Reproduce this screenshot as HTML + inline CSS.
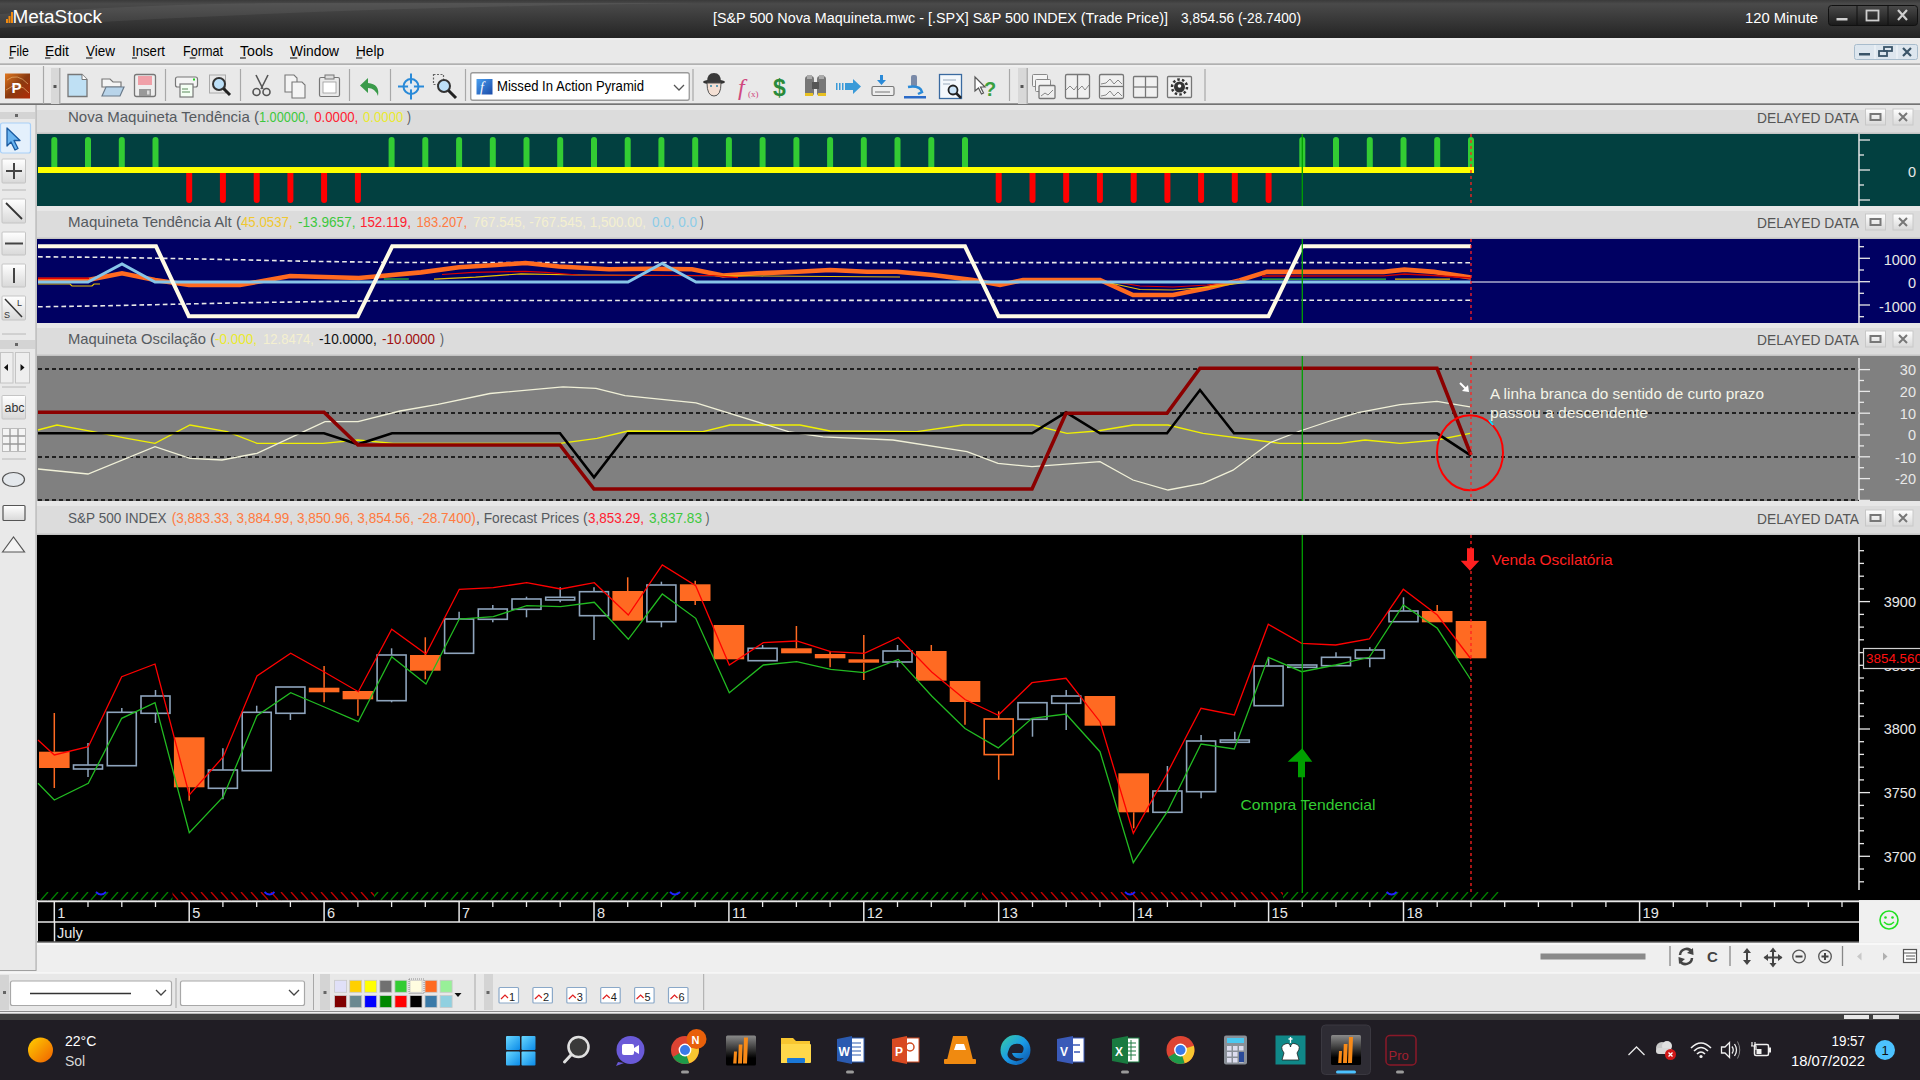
<!DOCTYPE html>
<html><head><meta charset="utf-8"><style>
html,body{margin:0;padding:0;width:1920px;height:1080px;overflow:hidden;background:#f0f0f0;font-family:"Liberation Sans", sans-serif;}
svg{display:block;}
</style></head><body>
<svg width="1920" height="1080" viewBox="0 0 1920 1080">
<defs>
<linearGradient id="tb" x1="0" y1="0" x2="0" y2="1">
<stop offset="0" stop-color="#3a3a3a"/><stop offset="0.1" stop-color="#4a4a4a"/><stop offset="0.5" stop-color="#393939"/><stop offset="1" stop-color="#242424"/></linearGradient>
<linearGradient id="hdr" x1="0" y1="0" x2="0" y2="1">
<stop offset="0" stop-color="#e6e6e6"/><stop offset="1" stop-color="#d8d8d8"/></linearGradient>
<linearGradient id="sun" x1="0" y1="0" x2="1" y2="1">
<stop offset="0" stop-color="#ffd000"/><stop offset="1" stop-color="#f06000"/></linearGradient>
<linearGradient id="btn" x1="0" y1="0" x2="0" y2="1">
<stop offset="0" stop-color="#ffffff"/><stop offset="1" stop-color="#d8d8d8"/></linearGradient>
<linearGradient id="wbtn" x1="0" y1="0" x2="0" y2="1">
<stop offset="0" stop-color="#4a4a4a"/><stop offset="1" stop-color="#1a1a1a"/></linearGradient>
<pattern id="hatchG" width="10" height="9" patternUnits="userSpaceOnUse"><path d="M1 9 L8 1" stroke="#008000" stroke-width="1.3"/></pattern>
<pattern id="hatchR" width="10" height="9" patternUnits="userSpaceOnUse"><path d="M1 1 L8 9" stroke="#c00000" stroke-width="1.3"/></pattern>
</defs><rect x="0" y="0" width="1920" height="1080" fill="#f0f0f0"/><rect x="0" y="0" width="1920" height="38" fill="url(#tb)"/><path d="M0 14 Q150 4 280 3 L700 3 Q300 8 0 28 Z" fill="#ffffff" opacity="0.06"/><rect x="6" y="19" width="2" height="4" fill="#f08a10"/><rect x="8.5" y="16" width="2" height="7" fill="#f08a10"/><rect x="11" y="12" width="2" height="11" fill="#f08a10"/><text x="12.5" y="23.2" font-family='"Liberation Sans", sans-serif' font-size="18" fill="#ffffff" textLength="89.5" lengthAdjust="spacingAndGlyphs">MetaStock</text><text x="713" y="23.2" font-family='"Liberation Sans", sans-serif' font-size="15.5" fill="#ffffff" textLength="455" lengthAdjust="spacingAndGlyphs">[S&amp;P 500 Nova Maquineta.mwc - [.SPX] S&amp;P 500 INDEX (Trade Price)]</text><text x="1181" y="23.2" font-family='"Liberation Sans", sans-serif' font-size="15.5" fill="#ffffff" textLength="120" lengthAdjust="spacingAndGlyphs">3,854.56 (-28.7400)</text><text x="1745" y="22.5" font-family='"Liberation Sans", sans-serif' font-size="15" fill="#ffffff" textLength="73" lengthAdjust="spacingAndGlyphs">120 Minute</text><rect x="1828.5" y="5.5" width="89" height="20" rx="3" fill="url(#wbtn)" stroke="#111" stroke-width="1"/><line x1="1857" y1="6" x2="1857" y2="25" stroke="#111"/><line x1="1888" y1="6" x2="1888" y2="25" stroke="#111"/><rect x="1836.5" y="18" width="11" height="2.5" fill="#cfcfcf"/><rect x="1866.5" y="10.5" width="12" height="10" fill="none" stroke="#cfcfcf" stroke-width="1.8"/><path d="M1898 10 L1907 20 M1907 10 L1898 20" stroke="#cfcfcf" stroke-width="2.2"/><rect x="0" y="38" width="1920" height="26" fill="#e9e9e9"/><rect x="0" y="38.5" width="1920" height="1" fill="#f4f4f4"/><rect x="0" y="63.3" width="1920" height="1.7" fill="#b0b0b0"/><text x="9" y="56" font-family='"Liberation Sans", sans-serif' font-size="15" fill="#000" textLength="20" lengthAdjust="spacingAndGlyphs">File</text><text x="45" y="56" font-family='"Liberation Sans", sans-serif' font-size="15" fill="#000" textLength="24" lengthAdjust="spacingAndGlyphs">Edit</text><text x="86" y="56" font-family='"Liberation Sans", sans-serif' font-size="15" fill="#000" textLength="29" lengthAdjust="spacingAndGlyphs">View</text><text x="132" y="56" font-family='"Liberation Sans", sans-serif' font-size="15" fill="#000" textLength="33" lengthAdjust="spacingAndGlyphs">Insert</text><text x="183" y="56" font-family='"Liberation Sans", sans-serif' font-size="15" fill="#000" textLength="40" lengthAdjust="spacingAndGlyphs">Format</text><text x="240" y="56" font-family='"Liberation Sans", sans-serif' font-size="15" fill="#000" textLength="33" lengthAdjust="spacingAndGlyphs">Tools</text><text x="290" y="56" font-family='"Liberation Sans", sans-serif' font-size="15" fill="#000" textLength="49" lengthAdjust="spacingAndGlyphs">Window</text><text x="356" y="56" font-family='"Liberation Sans", sans-serif' font-size="15" fill="#000" textLength="28" lengthAdjust="spacingAndGlyphs">Help</text><rect x="9.0" y="57.5" width="4.5" height="1" fill="#000"/><rect x="45.0" y="57.5" width="5.4" height="1" fill="#000"/><rect x="86.0" y="57.5" width="6.5" height="1" fill="#000"/><rect x="132.0" y="57.5" width="5.0" height="1" fill="#000"/><rect x="189.7" y="57.5" width="6.0" height="1" fill="#000"/><rect x="240.0" y="57.5" width="5.9" height="1" fill="#000"/><rect x="290.0" y="57.5" width="7.3" height="1" fill="#000"/><rect x="356.0" y="57.5" width="6.3" height="1" fill="#000"/><rect x="1854.5" y="44.5" width="63" height="15" rx="2" fill="#dde6ee" stroke="#a8bccc" stroke-width="1"/><line x1="1875" y1="45" x2="1875" y2="59" stroke="#f4f8fb"/><line x1="1897" y1="45" x2="1897" y2="59" stroke="#f4f8fb"/><rect x="1859" y="53" width="11" height="2.5" fill="#3a5468"/><rect x="1879" y="51" width="8" height="5" fill="none" stroke="#3a5468" stroke-width="1.8"/><rect x="1884" y="47" width="8" height="4" fill="none" stroke="#3a5468" stroke-width="1.8"/><path d="M1903 48 L1911 56 M1911 48 L1903 56" stroke="#3a5468" stroke-width="2.2"/><rect x="0" y="65" width="1920" height="39" fill="#e9e9e9"/><rect x="0" y="65.5" width="1920" height="1" fill="#f6f6f6"/><rect x="0" y="103.3" width="1920" height="2.2" fill="#747474"/><rect x="0" y="105" width="36" height="866" fill="#e9e9e9"/><rect x="35.6" y="105" width="2" height="866" fill="#9c9c9c"/><rect x="0" y="970" width="37" height="1.2" fill="#a0a0a0"/><rect x="36.5" y="105" width="1883.5" height="866" fill="#e8e8e8"/><linearGradient id="plogo" x1="0" y1="0" x2="1" y2="1"><stop offset="0" stop-color="#e07820"/><stop offset="0.5" stop-color="#8a3a10"/><stop offset="1" stop-color="#b02a08"/></linearGradient><rect x="5" y="73.5" width="25" height="25" fill="url(#plogo)"/><path d="M7 80 Q17 72 28 84 M6 90 Q18 80 29 93" stroke="#f0c080" stroke-width="1" fill="none" opacity="0.6"/><text x="11.5" y="93" font-family='"Liberation Sans", sans-serif' font-size="15" font-weight="bold" fill="#ffffff">P</text><line x1="43.5" y1="66" x2="43.5" y2="104" stroke="#a8a8a8" stroke-width="1.2"/><rect x="51" y="68" width="9" height="36" fill="#d8d8d8"/><rect x="59" y="68" width="1.5" height="36" fill="#b0b0b0"/><rect x="53.5" y="85" width="3" height="3" fill="#555"/><path d="M68 74.5 L82 74.5 L87 79.5 L87 96.5 L68 96.5 Z" fill="#bfe0f4" stroke="#777" stroke-width="1.3"/><path d="M82 74.5 L82 79.5 L87 79.5" fill="#fff" stroke="#777" stroke-width="1"/><path d="M102 79 L110 79 L113 82 L121 82 L121 87 L102 87 Z" fill="#f4f4f4" stroke="#777" stroke-width="1.2"/><path d="M102 96 L106 87 L124 87 L120 96 Z" fill="#b8d4ea" stroke="#6a7a8a" stroke-width="1.2"/><rect x="134.5" y="74.5" width="21" height="22" rx="2" fill="#eee" stroke="#777" stroke-width="1.3"/><rect x="138" y="76" width="14" height="9" fill="#f0a0a8"/><rect x="139" y="89" width="12" height="7" fill="#999"/><rect x="147" y="90.5" width="2.5" height="4" fill="#ddd"/><line x1="165.5" y1="69" x2="165.5" y2="101" stroke="#a8a8a8" stroke-width="1.2"/><rect x="175.5" y="77" width="22" height="10" rx="2" fill="#f4f4f4" stroke="#777" stroke-width="1.2"/><rect x="180" y="84" width="13" height="13" fill="#f4fff4" stroke="#777" stroke-width="1.2"/><line x1="182" y1="89" x2="188" y2="89" stroke="#5a8a5a"/><line x1="182" y1="92" x2="190" y2="92" stroke="#5a8a5a"/><rect x="193" y="78.5" width="2" height="2" fill="#2c2"/><rect x="209.5" y="75" width="16" height="18" fill="#e8e8e8" stroke="#aaa"/><circle cx="219" cy="84" r="6" fill="#bde0f8" stroke="#333" stroke-width="2"/><line x1="223.5" y1="88.5" x2="230" y2="95" stroke="#222" stroke-width="3"/><line x1="240.5" y1="69" x2="240.5" y2="101" stroke="#a8a8a8" stroke-width="1.2"/><path d="M256 75 L263 89 M268 75 L261 89" stroke="#555" stroke-width="1.6"/><circle cx="256.5" cy="92" r="3.5" fill="none" stroke="#555" stroke-width="1.6"/><circle cx="266.5" cy="92" r="3.5" fill="none" stroke="#555" stroke-width="1.6"/><path d="M285 75 L294 75 L297 78 L297 92 L285 92 Z" fill="#f4f4f4" stroke="#777" stroke-width="1.1"/><path d="M292 82 L302 82 L305 85 L305 98 L292 98 Z" fill="#f4f4f4" stroke="#777" stroke-width="1.1"/><rect x="319.5" y="77.5" width="20" height="19" rx="1.5" fill="#eaeaea" stroke="#777" stroke-width="1.2"/><rect x="325" y="75" width="9" height="4" fill="#ddd" stroke="#777"/><rect x="323" y="82" width="13" height="11" fill="#fff" stroke="#999" stroke-width="0.8"/><line x1="349.5" y1="69" x2="349.5" y2="101" stroke="#a8a8a8" stroke-width="1.2"/><path d="M378 96 Q380 84 368 83 L368 78 L360 85.5 L368 93 L368 88 Q375 88 378 96 Z" fill="#3a9a4a"/><line x1="390.5" y1="69" x2="390.5" y2="101" stroke="#a8a8a8" stroke-width="1.2"/><circle cx="411" cy="86.5" r="7.5" fill="none" stroke="#2a8ad8" stroke-width="2"/><line x1="398" y1="86.5" x2="424" y2="86.5" stroke="#2a8ad8" stroke-width="2"/><line x1="411" y1="73.5" x2="411" y2="99.5" stroke="#2a8ad8" stroke-width="2"/><circle cx="411" cy="86.5" r="3" fill="#e0ecf8"/><rect x="433.5" y="74.5" width="10" height="10" fill="none" stroke="#666" stroke-width="1.2" stroke-dasharray="2,1.5"/><circle cx="444" cy="86" r="6" fill="#bde0f8" stroke="#333" stroke-width="2"/><line x1="448.5" y1="90.5" x2="456" y2="98" stroke="#222" stroke-width="3"/><line x1="465.5" y1="69" x2="465.5" y2="101" stroke="#a8a8a8" stroke-width="1.2"/><rect x="470.75" y="72.75" width="218.5" height="27.5" rx="2" fill="#ffffff" stroke="#9a9a9a" stroke-width="1.3"/><linearGradient id="fblue" x1="0" y1="0" x2="1" y2="1"><stop offset="0" stop-color="#4aa0f0"/><stop offset="1" stop-color="#1a4aa8"/></linearGradient><rect x="476.5" y="79" width="16" height="15.5" fill="url(#fblue)"/><text x="480" y="91.5" font-family="Liberation Serif, serif" font-size="14" font-style="italic" fill="#fff">f</text><text x="497" y="91" font-family='"Liberation Sans", sans-serif' font-size="14.5" fill="#000" textLength="147" lengthAdjust="spacingAndGlyphs">Missed In Action Pyramid</text><path d="M674 85 L679 90 L684 85" fill="none" stroke="#555" stroke-width="1.3"/><line x1="693" y1="69" x2="693" y2="101" stroke="#a8a8a8" stroke-width="1.2"/><ellipse cx="714" cy="82" rx="11" ry="2.5" fill="#333"/><path d="M707 82 Q707 73 714 73 Q721 73 721 82 Z" fill="#3a3a3a"/><path d="M707 83 Q707 96 714 96 Q721 96 721 83 Z" fill="#f4e0d4" stroke="#555" stroke-width="1"/><circle cx="711" cy="86" r="1" fill="#38a"/><circle cx="717" cy="86" r="1" fill="#38a"/><text x="738" y="95" font-family="Liberation Serif, serif" font-size="24" font-style="italic" fill="#d04880">f</text><text x="748" y="97" font-family="Liberation Serif, serif" font-size="9" fill="#d04880">(x)</text><text x="773" y="96" font-family='"Liberation Sans", sans-serif' font-size="23" font-weight="bold" fill="#2a8a3a">$</text><rect x="805" y="76" width="9" height="20" rx="3" fill="#777"/><rect x="817" y="76" width="9" height="20" rx="3" fill="#777"/><rect x="812" y="82" width="7" height="7" fill="#555"/><rect x="805" y="93" width="8" height="3" fill="#e8c020"/><rect x="818" y="93" width="8" height="3" fill="#e8c020"/><rect x="807" y="75" width="5" height="4" fill="#aaa"/><rect x="819" y="75" width="5" height="4" fill="#aaa"/><path d="M836 83 L837.5 83 L837.5 90 L836 90 Z M839 83 L840.5 83 L840.5 90 L839 90 Z M842 83 L843.5 83 L843.5 90 L842 90 Z" fill="#3a9ad8"/><path d="M845 83 L853 83 L853 79 L861 86.5 L853 94 L853 90 L845 90 Z" fill="#3a9ad8"/><rect x="872" y="86.5" width="22" height="9" rx="1.5" fill="#eee" stroke="#777" stroke-width="1.2"/><line x1="875" y1="92" x2="890" y2="92" stroke="#777"/><path d="M880 75 L883 75 L883 80 L886 80 L881.5 85 L877 80 L880 80 Z" fill="#2a8ad8"/><rect x="911" y="75" width="6" height="12" rx="2" fill="#7a8aa8"/><path d="M908 87 Q920 85 922 92 L918 94" fill="none" stroke="#2a8ad8" stroke-width="2.5"/><rect x="904" y="96" width="22" height="2.5" fill="#2a6ac8"/><rect x="939.5" y="74.5" width="22" height="24" fill="#f4f8fc" stroke="#3a6aa0" stroke-width="1.3"/><line x1="943" y1="80" x2="956" y2="80" stroke="#9ab"/><line x1="943" y1="84" x2="950" y2="84" stroke="#9ab"/><circle cx="953" cy="90" r="4.5" fill="#cce4f8" stroke="#222" stroke-width="1.8"/><line x1="956" y1="93" x2="961" y2="98" stroke="#222" stroke-width="2.5"/><path d="M975 77 L975 91 L978.5 88 L981.5 94 L983.5 93 L980.5 87 L985 87 Z" fill="#fff" stroke="#555" stroke-width="1.2"/><text x="984" y="96" font-family='"Liberation Sans", sans-serif' font-size="20" font-weight="bold" fill="#3aa040">?</text><line x1="1009.5" y1="69" x2="1009.5" y2="101" stroke="#a8a8a8" stroke-width="1.2"/><rect x="1018" y="68" width="9" height="36" fill="#d8d8d8"/><rect x="1026.5" y="68" width="1.5" height="36" fill="#b0b0b0"/><rect x="1020.5" y="85" width="3" height="3" fill="#555"/><rect x="1032.5" y="74.5" width="15" height="12" rx="1" fill="#f4f4f4" stroke="#888"/><rect x="1035.5" y="79.5" width="15" height="12" rx="1" fill="#f4f4f4" stroke="#888"/><rect x="1039" y="85.5" width="16" height="13" rx="1" fill="#eee" stroke="#777" stroke-width="1.3"/><path d="M1041 96 L1045 93 L1048 95 L1053 90" fill="none" stroke="#888"/><rect x="1065.5" y="74.5" width="24" height="24" rx="1.5" fill="#f0f0f0" stroke="#777" stroke-width="1.3"/><line x1="1077.5" y1="75" x2="1077.5" y2="98" stroke="#777" stroke-width="1.3"/><path d="M1066 90 L1070 86 L1074 90 L1077 86 M1078 90 L1082 86 L1085 90 L1089 85" fill="none" stroke="#888"/><rect x="1099.5" y="74.5" width="24" height="24" rx="1.5" fill="#f0f0f0" stroke="#777" stroke-width="1.3"/><line x1="1100" y1="86.5" x2="1123" y2="86.5" stroke="#777" stroke-width="1.3"/><path d="M1101 84 L1106 83 L1110 79 L1114 84 L1118 80 L1122 84 M1101 96 L1106 95 L1110 91 L1114 96 L1118 92 L1122 96" fill="none" stroke="#888"/><rect x="1133.5" y="76.5" width="24" height="21" rx="1" fill="#f0f0f0" stroke="#777" stroke-width="1.3"/><line x1="1145.5" y1="77" x2="1145.5" y2="97" stroke="#777" stroke-width="1.3"/><line x1="1134" y1="87" x2="1157" y2="87" stroke="#777" stroke-width="1.3"/><rect x="1167.5" y="76.5" width="24" height="21" rx="1" fill="#f0f0f0" stroke="#777" stroke-width="1.3"/><circle cx="1179.5" cy="87" r="5.5" fill="#333"/><circle cx="1179.5" cy="87" r="7.5" fill="none" stroke="#333" stroke-width="2.5" stroke-dasharray="2.5,2.2"/><circle cx="1179.5" cy="86" r="1.8" fill="#fff"/><line x1="1205" y1="69" x2="1205" y2="101" stroke="#a8a8a8" stroke-width="1.2"/>
<rect x="37" y="105" width="1883" height="29" fill="#dcdcdc"/><rect x="37" y="105" width="1883" height="5" fill="#e7e7e7"/><rect x="37" y="132.5" width="1883" height="1.5" fill="#c4c4c4"/><rect x="37" y="134" width="1883" height="72" fill="#024040"/><text x="1757" y="122.5" font-family='"Liberation Sans", sans-serif' font-size="15" fill="#555555" textLength="102" lengthAdjust="spacingAndGlyphs">DELAYED DATA</text><rect x="1865.5" y="109.0" width="20" height="16" fill="url(#btn)" stroke="#c8c8c8"/><rect x="1870.5" y="114.0" width="10" height="6" fill="none" stroke="#777" stroke-width="2"/><rect x="1893" y="109.0" width="20" height="16" fill="url(#btn)" stroke="#c8c8c8"/><path d="M1899 113.0 L1907 121.0 M1907 113.0 L1899 121.0" stroke="#777" stroke-width="2"/><rect x="37" y="206" width="1883" height="33" fill="#dcdcdc"/><rect x="37" y="206" width="1883" height="5" fill="#e7e7e7"/><rect x="37" y="237.5" width="1883" height="1.5" fill="#c4c4c4"/><rect x="37" y="239" width="1883" height="84" fill="#000062"/><text x="1757" y="227.5" font-family='"Liberation Sans", sans-serif' font-size="15" fill="#555555" textLength="102" lengthAdjust="spacingAndGlyphs">DELAYED DATA</text><rect x="1865.5" y="214.0" width="20" height="16" fill="url(#btn)" stroke="#c8c8c8"/><rect x="1870.5" y="219.0" width="10" height="6" fill="none" stroke="#777" stroke-width="2"/><rect x="1893" y="214.0" width="20" height="16" fill="url(#btn)" stroke="#c8c8c8"/><path d="M1899 218.0 L1907 226.0 M1907 218.0 L1899 226.0" stroke="#777" stroke-width="2"/><rect x="37" y="323" width="1883" height="33" fill="#dcdcdc"/><rect x="37" y="323" width="1883" height="5" fill="#e7e7e7"/><rect x="37" y="354.5" width="1883" height="1.5" fill="#c4c4c4"/><rect x="37" y="356" width="1883" height="145" fill="#808080"/><text x="1757" y="344.5" font-family='"Liberation Sans", sans-serif' font-size="15" fill="#555555" textLength="102" lengthAdjust="spacingAndGlyphs">DELAYED DATA</text><rect x="1865.5" y="331.0" width="20" height="16" fill="url(#btn)" stroke="#c8c8c8"/><rect x="1870.5" y="336.0" width="10" height="6" fill="none" stroke="#777" stroke-width="2"/><rect x="1893" y="331.0" width="20" height="16" fill="url(#btn)" stroke="#c8c8c8"/><path d="M1899 335.0 L1907 343.0 M1907 335.0 L1899 343.0" stroke="#777" stroke-width="2"/><rect x="37" y="501" width="1883" height="34" fill="#dcdcdc"/><rect x="37" y="501" width="1883" height="5" fill="#e7e7e7"/><rect x="37" y="533.5" width="1883" height="1.5" fill="#c4c4c4"/><rect x="37" y="535" width="1883" height="365" fill="#000000"/><text x="1757" y="523.5" font-family='"Liberation Sans", sans-serif' font-size="15" fill="#555555" textLength="102" lengthAdjust="spacingAndGlyphs">DELAYED DATA</text><rect x="1865.5" y="510.0" width="20" height="16" fill="url(#btn)" stroke="#c8c8c8"/><rect x="1870.5" y="515.0" width="10" height="6" fill="none" stroke="#777" stroke-width="2"/><rect x="1893" y="510.0" width="20" height="16" fill="url(#btn)" stroke="#c8c8c8"/><path d="M1899 514.0 L1907 522.0 M1907 514.0 L1899 522.0" stroke="#777" stroke-width="2"/><line x1="54.3" y1="140" x2="54.3" y2="170" stroke="#33cc33" stroke-width="6" stroke-linecap="round"/><line x1="88.0" y1="140" x2="88.0" y2="170" stroke="#33cc33" stroke-width="6" stroke-linecap="round"/><line x1="121.8" y1="140" x2="121.8" y2="170" stroke="#33cc33" stroke-width="6" stroke-linecap="round"/><line x1="155.5" y1="140" x2="155.5" y2="170" stroke="#33cc33" stroke-width="6" stroke-linecap="round"/><line x1="189.2" y1="170" x2="189.2" y2="200" stroke="#ff0000" stroke-width="6" stroke-linecap="round"/><line x1="222.9" y1="170" x2="222.9" y2="200" stroke="#ff0000" stroke-width="6" stroke-linecap="round"/><line x1="256.7" y1="170" x2="256.7" y2="200" stroke="#ff0000" stroke-width="6" stroke-linecap="round"/><line x1="290.4" y1="170" x2="290.4" y2="200" stroke="#ff0000" stroke-width="6" stroke-linecap="round"/><line x1="324.1" y1="170" x2="324.1" y2="200" stroke="#ff0000" stroke-width="6" stroke-linecap="round"/><line x1="357.9" y1="170" x2="357.9" y2="200" stroke="#ff0000" stroke-width="6" stroke-linecap="round"/><line x1="391.6" y1="140" x2="391.6" y2="170" stroke="#33cc33" stroke-width="6" stroke-linecap="round"/><line x1="425.3" y1="140" x2="425.3" y2="170" stroke="#33cc33" stroke-width="6" stroke-linecap="round"/><line x1="459.1" y1="140" x2="459.1" y2="170" stroke="#33cc33" stroke-width="6" stroke-linecap="round"/><line x1="492.8" y1="140" x2="492.8" y2="170" stroke="#33cc33" stroke-width="6" stroke-linecap="round"/><line x1="526.5" y1="140" x2="526.5" y2="170" stroke="#33cc33" stroke-width="6" stroke-linecap="round"/><line x1="560.2" y1="140" x2="560.2" y2="170" stroke="#33cc33" stroke-width="6" stroke-linecap="round"/><line x1="594.0" y1="140" x2="594.0" y2="170" stroke="#33cc33" stroke-width="6" stroke-linecap="round"/><line x1="627.7" y1="140" x2="627.7" y2="170" stroke="#33cc33" stroke-width="6" stroke-linecap="round"/><line x1="661.4" y1="140" x2="661.4" y2="170" stroke="#33cc33" stroke-width="6" stroke-linecap="round"/><line x1="695.2" y1="140" x2="695.2" y2="170" stroke="#33cc33" stroke-width="6" stroke-linecap="round"/><line x1="728.9" y1="140" x2="728.9" y2="170" stroke="#33cc33" stroke-width="6" stroke-linecap="round"/><line x1="762.6" y1="140" x2="762.6" y2="170" stroke="#33cc33" stroke-width="6" stroke-linecap="round"/><line x1="796.4" y1="140" x2="796.4" y2="170" stroke="#33cc33" stroke-width="6" stroke-linecap="round"/><line x1="830.1" y1="140" x2="830.1" y2="170" stroke="#33cc33" stroke-width="6" stroke-linecap="round"/><line x1="863.8" y1="140" x2="863.8" y2="170" stroke="#33cc33" stroke-width="6" stroke-linecap="round"/><line x1="897.5" y1="140" x2="897.5" y2="170" stroke="#33cc33" stroke-width="6" stroke-linecap="round"/><line x1="931.3" y1="140" x2="931.3" y2="170" stroke="#33cc33" stroke-width="6" stroke-linecap="round"/><line x1="965.0" y1="140" x2="965.0" y2="170" stroke="#33cc33" stroke-width="6" stroke-linecap="round"/><line x1="998.7" y1="170" x2="998.7" y2="200" stroke="#ff0000" stroke-width="6" stroke-linecap="round"/><line x1="1032.5" y1="170" x2="1032.5" y2="200" stroke="#ff0000" stroke-width="6" stroke-linecap="round"/><line x1="1066.2" y1="170" x2="1066.2" y2="200" stroke="#ff0000" stroke-width="6" stroke-linecap="round"/><line x1="1099.9" y1="170" x2="1099.9" y2="200" stroke="#ff0000" stroke-width="6" stroke-linecap="round"/><line x1="1133.7" y1="170" x2="1133.7" y2="200" stroke="#ff0000" stroke-width="6" stroke-linecap="round"/><line x1="1167.4" y1="170" x2="1167.4" y2="200" stroke="#ff0000" stroke-width="6" stroke-linecap="round"/><line x1="1201.1" y1="170" x2="1201.1" y2="200" stroke="#ff0000" stroke-width="6" stroke-linecap="round"/><line x1="1234.8" y1="170" x2="1234.8" y2="200" stroke="#ff0000" stroke-width="6" stroke-linecap="round"/><line x1="1268.6" y1="170" x2="1268.6" y2="200" stroke="#ff0000" stroke-width="6" stroke-linecap="round"/><line x1="1302.3" y1="140" x2="1302.3" y2="170" stroke="#33cc33" stroke-width="6" stroke-linecap="round"/><line x1="1336.0" y1="140" x2="1336.0" y2="170" stroke="#33cc33" stroke-width="6" stroke-linecap="round"/><line x1="1369.8" y1="140" x2="1369.8" y2="170" stroke="#33cc33" stroke-width="6" stroke-linecap="round"/><line x1="1403.5" y1="140" x2="1403.5" y2="170" stroke="#33cc33" stroke-width="6" stroke-linecap="round"/><line x1="1437.2" y1="140" x2="1437.2" y2="170" stroke="#33cc33" stroke-width="6" stroke-linecap="round"/><line x1="1471.0" y1="140" x2="1471.0" y2="170" stroke="#33cc33" stroke-width="6" stroke-linecap="round"/><rect x="38" y="167" width="1436" height="6" fill="#ffff00"/><polyline points="38.0,256.8 104.0,257.3 172.0,258.5 240.0,259.8 306.0,261.3 400.0,262.5 1471.0,262.7" fill="none" stroke="#e8e8e8" stroke-width="1.6" stroke-linejoin="miter" stroke-dasharray="4.7,3.1"/><polyline points="38.0,306.8 104.0,305.8 172.0,304.3 240.0,302.8 306.0,301.8 400.0,300.5 1471.0,300.2" fill="none" stroke="#e8e8e8" stroke-width="1.6" stroke-linejoin="miter" stroke-dasharray="4.7,3.1"/><line x1="1471" y1="282" x2="1859" y2="282" stroke="#ffffff" stroke-width="1"/><polyline points="38.0,280.0 88.0,280.0 122.0,273.3 155.0,280.0 189.0,285.0 240.0,285.0 290.0,276.0 324.0,277.0 358.8,278.0 375.5,276.5 421.0,272.4 459.0,267.2 496.0,265.0 525.5,263.0 559.0,266.5 609.0,269.2 650.5,268.8 692.0,269.2 723.0,275.5 757.0,273.3 797.0,271.7 830.0,270.0 867.0,271.7 897.0,271.7 933.0,275.0 973.0,280.0 1000.0,285.0 1023.0,280.0 1100.0,280.0 1133.0,295.0 1173.0,295.0 1207.0,288.3 1239.4,280.4 1266.9,271.9 1292.0,271.9 1383.7,271.9 1404.3,269.6 1434.0,271.9 1471.0,277.4" fill="none" stroke="#ff6a20" stroke-width="4.6" stroke-linejoin="miter" /><polyline points="434.0,279.2 475.5,277.2 521.0,273.8 577.6,275.0 760.0,276.0 900.0,277.0" fill="none" stroke="#e8c000" stroke-width="1.2" stroke-linejoin="miter" /><polyline points="442.0,274.5 473.0,272.4 525.5,271.3 546.0,272.4 577.6,275.0 713.0,275.5 738.0,277.6" fill="none" stroke="#e00000" stroke-width="1.2" stroke-linejoin="miter" /><polyline points="383.8,279.0 408.8,279.0" fill="none" stroke="#30c030" stroke-width="1.2" stroke-linejoin="miter" /><polyline points="1110.0,283.0 1140.0,289.5 1173.0,290.0 1210.0,287.0 1250.0,282.0" fill="none" stroke="#e8c000" stroke-width="1.2" stroke-linejoin="miter" /><polyline points="1110.0,281.0 1140.0,286.0 1173.0,287.0 1207.0,285.0 1240.0,280.0" fill="none" stroke="#e00000" stroke-width="1.2" stroke-linejoin="miter" /><polyline points="38.0,278.3 89.0,278.3" fill="none" stroke="#e00000" stroke-width="1.5" stroke-linejoin="miter" /><polyline points="1262.0,276.0 1383.7,275.8 1404.3,274.0 1434.0,275.5 1471.0,278.0" fill="none" stroke="#d00000" stroke-width="1.3" stroke-linejoin="miter" /><polyline points="1262.0,279.2 1386.0,279.2" fill="none" stroke="#30c030" stroke-width="1.3" stroke-linejoin="miter" /><polyline points="1395.0,279.2 1450.0,279.2" fill="none" stroke="#e8c000" stroke-width="1.3" stroke-linejoin="miter" /><polyline points="38.0,284.0 70.0,284.0 72.0,286.0 92.0,286.0 94.0,284.0 100.0,284.0" fill="none" stroke="#e8c000" stroke-width="1.2" stroke-linejoin="miter" /><polyline points="38.0,282.0 88.0,282.0 122.0,264.0 155.0,282.0 628.0,282.0 662.0,263.5 696.0,282.0 1471.0,282.0" fill="none" stroke="#87c5e8" stroke-width="3" stroke-linejoin="miter" /><polyline points="38.0,246.3 156.0,246.3 188.8,316.2 357.8,316.2 392.2,246.3 965.0,246.3 998.5,316.2 1268.5,316.2 1302.3,246.3 1471.0,246.3" fill="none" stroke="#fffbe6" stroke-width="4" stroke-linejoin="miter" /><line x1="38" y1="369" x2="1859" y2="369" stroke="#000000" stroke-width="1.3" stroke-dasharray="4,3"/><line x1="38" y1="413" x2="1859" y2="413" stroke="#000000" stroke-width="1.3" stroke-dasharray="4,3"/><line x1="38" y1="457" x2="1859" y2="457" stroke="#000000" stroke-width="1.3" stroke-dasharray="4,3"/><line x1="38" y1="500" x2="1859" y2="500" stroke="#000000" stroke-width="1.3" stroke-dasharray="4,3"/><polyline points="38.0,430.0 57.0,425.0 93.0,431.7 127.0,438.3 155.0,443.3 190.0,425.0 227.0,431.7 257.0,443.3 323.0,443.3 358.0,440.0 393.0,443.3 560.0,443.3 597.0,438.3 628.0,431.0 703.0,431.7 730.0,425.0 800.0,425.0 830.0,431.0 917.0,431.7 963.0,425.0 1033.0,425.0 1067.0,433.3 1097.0,431.0 1133.0,425.0 1168.0,425.0 1203.0,433.3 1280.0,443.3 1340.0,443.3 1365.0,440.0 1400.0,443.3 1437.0,440.0 1470.0,433.3" fill="none" stroke="#f0f000" stroke-width="1.3" stroke-linejoin="miter" /><polyline points="38.0,469.0 88.0,474.0 155.0,446.7 190.0,458.3 222.0,460.0 257.0,453.3 325.0,421.7 358.0,421.7 400.0,411.0 438.0,404.3 490.0,393.5 563.0,386.8 596.0,388.3 625.0,395.6 696.0,402.9 790.0,432.0 823.0,436.8 893.0,440.0 967.0,451.7 998.0,463.3 1032.0,466.7 1100.0,461.7 1133.0,480.0 1168.0,490.0 1203.0,483.3 1233.0,470.2 1270.0,442.7 1300.0,431.0 1330.0,421.0 1358.0,412.7 1400.0,404.7 1437.0,401.3 1470.0,406.8" fill="none" stroke="#f0f0d8" stroke-width="1.3" stroke-linejoin="miter" /><polyline points="38.0,433.3 324.0,433.3 358.0,444.3 392.0,433.3 560.0,433.3 594.0,477.3 628.0,433.3 1032.0,433.3 1066.0,412.3 1100.0,433.3 1167.0,433.3 1200.0,390.0 1234.0,433.3 1437.0,433.3 1471.0,455.7" fill="none" stroke="#000000" stroke-width="2.6" stroke-linejoin="miter" /><polyline points="38.0,412.3 324.0,412.3 358.0,445.0 560.0,445.0 594.0,489.0 1032.0,489.0 1066.0,413.3 1167.0,413.3 1200.0,368.3 1437.0,368.3 1471.0,455.0" fill="none" stroke="#8b0000" stroke-width="3.6" stroke-linejoin="miter" /><ellipse cx="1470" cy="452.7" rx="33" ry="37.5" fill="none" stroke="#ff0000" stroke-width="2"/><text x="1490" y="398.5" font-family='"Liberation Sans", sans-serif' font-size="15" fill="#f4f4e8" textLength="274" lengthAdjust="spacingAndGlyphs">A linha branca do sentido de curto prazo</text><text x="1490" y="417.5" font-family='"Liberation Sans", sans-serif' font-size="15" fill="#f4f4e8" textLength="158" lengthAdjust="spacingAndGlyphs">passou a descendente</text><path d="M1460 383 L1467 390" stroke="#ffffff" stroke-width="2"/><path d="M1469 392 L1462 391 L1468 385 Z" fill="#ffffff"/><line x1="1489" y1="420" x2="1493" y2="425" stroke="#00e0ff" stroke-width="2"/><line x1="54.3" y1="713" x2="54.3" y2="751.7" stroke="#ff6a22" stroke-width="1.5"/><line x1="54.3" y1="768" x2="54.3" y2="788" stroke="#ff6a22" stroke-width="1.5"/><rect x="39.0" y="751.7" width="30.6" height="16.3" fill="#ff6a22"/><line x1="88.0" y1="743" x2="88.0" y2="765" stroke="#8ea4bc" stroke-width="1.5"/><line x1="88.0" y1="769" x2="88.0" y2="777" stroke="#8ea4bc" stroke-width="1.5"/><rect x="73.5" y="765" width="29" height="4.0" fill="none" stroke="#8ea4bc" stroke-width="1.6"/><line x1="121.8" y1="708" x2="121.8" y2="712.3" stroke="#8ea4bc" stroke-width="1.5"/><line x1="121.8" y1="765.7" x2="121.8" y2="766" stroke="#8ea4bc" stroke-width="1.5"/><rect x="107.3" y="712.3" width="29" height="53.4" fill="none" stroke="#8ea4bc" stroke-width="1.6"/><line x1="155.5" y1="690" x2="155.5" y2="696" stroke="#8ea4bc" stroke-width="1.5"/><line x1="155.5" y1="713.3" x2="155.5" y2="723" stroke="#8ea4bc" stroke-width="1.5"/><rect x="141.0" y="696" width="29" height="17.3" fill="none" stroke="#8ea4bc" stroke-width="1.6"/><line x1="189.2" y1="787.3" x2="189.2" y2="800.7" stroke="#ff6a22" stroke-width="1.5"/><rect x="173.9" y="737.3" width="30.6" height="50.0" fill="#ff6a22"/><line x1="222.9" y1="748.3" x2="222.9" y2="770" stroke="#8ea4bc" stroke-width="1.5"/><line x1="222.9" y1="788.3" x2="222.9" y2="799.3" stroke="#8ea4bc" stroke-width="1.5"/><rect x="208.4" y="770" width="29" height="18.3" fill="none" stroke="#8ea4bc" stroke-width="1.6"/><line x1="256.7" y1="705.7" x2="256.7" y2="712.3" stroke="#8ea4bc" stroke-width="1.5"/><rect x="242.2" y="712.3" width="29" height="58.4" fill="none" stroke="#8ea4bc" stroke-width="1.6"/><line x1="290.4" y1="713.3" x2="290.4" y2="720" stroke="#8ea4bc" stroke-width="1.5"/><rect x="275.9" y="687" width="29" height="26.3" fill="none" stroke="#8ea4bc" stroke-width="1.6"/><line x1="324.1" y1="666" x2="324.1" y2="687.7" stroke="#ff6a22" stroke-width="1.5"/><line x1="324.1" y1="692.3" x2="324.1" y2="702.3" stroke="#ff6a22" stroke-width="1.5"/><rect x="308.8" y="687.7" width="30.6" height="4.6" fill="#ff6a22"/><line x1="357.9" y1="699.3" x2="357.9" y2="715.7" stroke="#ff6a22" stroke-width="1.5"/><rect x="342.6" y="691" width="30.6" height="8.3" fill="#ff6a22"/><line x1="391.6" y1="648.3" x2="391.6" y2="655" stroke="#8ea4bc" stroke-width="1.5"/><line x1="391.6" y1="700.7" x2="391.6" y2="702.3" stroke="#8ea4bc" stroke-width="1.5"/><rect x="377.1" y="655" width="29" height="45.7" fill="none" stroke="#8ea4bc" stroke-width="1.6"/><line x1="425.3" y1="637.3" x2="425.3" y2="655" stroke="#ff6a22" stroke-width="1.5"/><line x1="425.3" y1="670.7" x2="425.3" y2="679.3" stroke="#ff6a22" stroke-width="1.5"/><rect x="410.0" y="655" width="30.6" height="15.7" fill="#ff6a22"/><line x1="459.1" y1="611.7" x2="459.1" y2="619" stroke="#8ea4bc" stroke-width="1.5"/><rect x="444.6" y="619" width="29" height="34.3" fill="none" stroke="#8ea4bc" stroke-width="1.6"/><line x1="492.8" y1="605" x2="492.8" y2="609" stroke="#8ea4bc" stroke-width="1.5"/><line x1="492.8" y1="619.3" x2="492.8" y2="622.3" stroke="#8ea4bc" stroke-width="1.5"/><rect x="478.3" y="609" width="29" height="10.3" fill="none" stroke="#8ea4bc" stroke-width="1.6"/><line x1="526.5" y1="596.7" x2="526.5" y2="599" stroke="#8ea4bc" stroke-width="1.5"/><line x1="526.5" y1="609.3" x2="526.5" y2="617.3" stroke="#8ea4bc" stroke-width="1.5"/><rect x="512.0" y="599" width="29" height="10.3" fill="none" stroke="#8ea4bc" stroke-width="1.6"/><line x1="560.2" y1="587.3" x2="560.2" y2="597.3" stroke="#8ea4bc" stroke-width="1.5"/><line x1="560.2" y1="600" x2="560.2" y2="602.3" stroke="#8ea4bc" stroke-width="1.5"/><rect x="545.7" y="597.3" width="29" height="2.7" fill="none" stroke="#8ea4bc" stroke-width="1.6"/><line x1="594.0" y1="587.3" x2="594.0" y2="591.7" stroke="#8ea4bc" stroke-width="1.5"/><line x1="594.0" y1="615.7" x2="594.0" y2="640" stroke="#8ea4bc" stroke-width="1.5"/><rect x="579.5" y="591.7" width="29" height="24.0" fill="none" stroke="#8ea4bc" stroke-width="1.6"/><line x1="627.7" y1="577.3" x2="627.7" y2="591" stroke="#ff6a22" stroke-width="1.5"/><rect x="612.4" y="591" width="30.6" height="29.7" fill="#ff6a22"/><line x1="661.4" y1="581.7" x2="661.4" y2="585" stroke="#8ea4bc" stroke-width="1.5"/><line x1="661.4" y1="621.7" x2="661.4" y2="627.3" stroke="#8ea4bc" stroke-width="1.5"/><rect x="646.9" y="585" width="29" height="36.7" fill="none" stroke="#8ea4bc" stroke-width="1.6"/><line x1="695.2" y1="580.7" x2="695.2" y2="584.3" stroke="#ff6a22" stroke-width="1.5"/><line x1="695.2" y1="601" x2="695.2" y2="605" stroke="#ff6a22" stroke-width="1.5"/><rect x="679.9" y="584.3" width="30.6" height="16.7" fill="#ff6a22"/><rect x="713.6" y="625" width="30.6" height="34.3" fill="#ff6a22"/><line x1="762.6" y1="645" x2="762.6" y2="648.3" stroke="#8ea4bc" stroke-width="1.5"/><rect x="748.1" y="648.3" width="29" height="12.4" fill="none" stroke="#8ea4bc" stroke-width="1.6"/><line x1="796.4" y1="626" x2="796.4" y2="648.3" stroke="#ff6a22" stroke-width="1.5"/><rect x="781.1" y="648.3" width="30.6" height="5.0" fill="#ff6a22"/><line x1="830.1" y1="651.7" x2="830.1" y2="654" stroke="#ff6a22" stroke-width="1.5"/><line x1="830.1" y1="658.3" x2="830.1" y2="667.3" stroke="#ff6a22" stroke-width="1.5"/><rect x="814.8" y="654" width="30.6" height="4.3" fill="#ff6a22"/><line x1="863.8" y1="635" x2="863.8" y2="659.3" stroke="#ff6a22" stroke-width="1.5"/><line x1="863.8" y1="662.7" x2="863.8" y2="680" stroke="#ff6a22" stroke-width="1.5"/><rect x="848.5" y="659.3" width="30.6" height="3.4" fill="#ff6a22"/><line x1="897.5" y1="645" x2="897.5" y2="651" stroke="#8ea4bc" stroke-width="1.5"/><line x1="897.5" y1="662" x2="897.5" y2="667.3" stroke="#8ea4bc" stroke-width="1.5"/><rect x="883.0" y="651" width="29" height="11.0" fill="none" stroke="#8ea4bc" stroke-width="1.6"/><line x1="931.3" y1="645" x2="931.3" y2="651" stroke="#ff6a22" stroke-width="1.5"/><rect x="916.0" y="651" width="30.6" height="29.7" fill="#ff6a22"/><line x1="965.0" y1="702" x2="965.0" y2="724.7" stroke="#ff6a22" stroke-width="1.5"/><rect x="949.7" y="681" width="30.6" height="21.0" fill="#ff6a22"/><line x1="998.7" y1="711.3" x2="998.7" y2="719" stroke="#ff6a22" stroke-width="1.5"/><line x1="998.7" y1="754.6" x2="998.7" y2="779.8" stroke="#ff6a22" stroke-width="1.5"/><rect x="984.2" y="719" width="29" height="35.6" fill="none" stroke="#ff6a22" stroke-width="1.6"/><line x1="1032.5" y1="719.3" x2="1032.5" y2="736.7" stroke="#8ea4bc" stroke-width="1.5"/><rect x="1018.0" y="702.7" width="29" height="16.6" fill="none" stroke="#8ea4bc" stroke-width="1.6"/><line x1="1066.2" y1="690" x2="1066.2" y2="696" stroke="#8ea4bc" stroke-width="1.5"/><line x1="1066.2" y1="703.3" x2="1066.2" y2="730" stroke="#8ea4bc" stroke-width="1.5"/><rect x="1051.7" y="696" width="29" height="7.3" fill="none" stroke="#8ea4bc" stroke-width="1.6"/><rect x="1084.6" y="696" width="30.6" height="29.7" fill="#ff6a22"/><line x1="1133.7" y1="812.3" x2="1133.7" y2="828.3" stroke="#ff6a22" stroke-width="1.5"/><rect x="1118.4" y="773.3" width="30.6" height="39.0" fill="#ff6a22"/><line x1="1167.4" y1="766" x2="1167.4" y2="791" stroke="#8ea4bc" stroke-width="1.5"/><rect x="1152.9" y="791" width="29" height="21.3" fill="none" stroke="#8ea4bc" stroke-width="1.6"/><line x1="1201.1" y1="735" x2="1201.1" y2="741" stroke="#8ea4bc" stroke-width="1.5"/><line x1="1201.1" y1="791.7" x2="1201.1" y2="798.3" stroke="#8ea4bc" stroke-width="1.5"/><rect x="1186.6" y="741" width="29" height="50.7" fill="none" stroke="#8ea4bc" stroke-width="1.6"/><line x1="1234.8" y1="731.7" x2="1234.8" y2="740" stroke="#8ea4bc" stroke-width="1.5"/><rect x="1220.3" y="740" width="29" height="2.3" fill="none" stroke="#8ea4bc" stroke-width="1.6"/><line x1="1268.6" y1="658.3" x2="1268.6" y2="666" stroke="#8ea4bc" stroke-width="1.5"/><rect x="1254.1" y="666" width="29" height="39.7" fill="none" stroke="#8ea4bc" stroke-width="1.6"/><rect x="1287.8" y="665" width="29" height="2.3" fill="none" stroke="#8ea4bc" stroke-width="1.6"/><line x1="1336.0" y1="652.3" x2="1336.0" y2="657.3" stroke="#8ea4bc" stroke-width="1.5"/><rect x="1321.5" y="657.3" width="29" height="8.4" fill="none" stroke="#8ea4bc" stroke-width="1.6"/><line x1="1369.8" y1="647.3" x2="1369.8" y2="650" stroke="#8ea4bc" stroke-width="1.5"/><line x1="1369.8" y1="658.3" x2="1369.8" y2="667.3" stroke="#8ea4bc" stroke-width="1.5"/><rect x="1355.3" y="650" width="29" height="8.3" fill="none" stroke="#8ea4bc" stroke-width="1.6"/><line x1="1403.5" y1="597.3" x2="1403.5" y2="611" stroke="#8ea4bc" stroke-width="1.5"/><rect x="1389.0" y="611" width="29" height="10.7" fill="none" stroke="#8ea4bc" stroke-width="1.6"/><line x1="1437.2" y1="605" x2="1437.2" y2="611" stroke="#ff6a22" stroke-width="1.5"/><rect x="1421.9" y="611" width="30.6" height="11.3" fill="#ff6a22"/><rect x="1455.7" y="621" width="30.6" height="37.3" fill="#ff6a22"/><polyline points="38.0,740.0 54.3,755.0 88.3,746.7 121.7,676.7 155.0,664.0 189.3,795.0 223.3,756.7 257.0,676.0 290.7,653.3 324.3,672.0 358.3,691.7 391.7,629.3 426.0,654.0 459.3,589.3 493.3,587.7 526.7,582.7 560.7,589.0 594.3,582.7 628.3,615.0 662.3,565.0 695.7,585.7 729.3,665.0 763.3,642.7 796.7,641.0 830.7,651.7 864.3,653.3 898.3,637.5 931.7,672.0 965.0,699.5 998.3,715.3 1032.0,682.7 1066.0,678.3 1100.0,721.7 1133.3,833.3 1167.3,773.0 1201.0,708.3 1234.3,715.0 1268.3,624.3 1301.7,643.3 1335.7,645.0 1369.3,639.0 1403.3,589.3 1437.3,615.0 1471.0,659.0" fill="none" stroke="#ff0000" stroke-width="1.3" stroke-linejoin="miter" /><polyline points="38.0,783.3 54.3,800.0 88.3,783.3 121.7,718.3 155.0,702.7 189.3,832.7 223.3,796.7 257.0,715.7 290.7,692.7 324.3,707.0 358.3,721.7 391.7,656.7 426.0,684.0 459.3,619.0 493.3,616.7 526.7,605.7 560.7,606.7 594.3,602.3 628.3,639.3 662.3,594.0 695.7,618.3 729.3,692.7 763.3,665.0 796.7,661.7 830.7,669.3 864.3,672.7 898.3,659.4 931.7,696.0 965.0,728.5 998.3,747.9 1032.0,718.3 1066.0,714.0 1100.0,751.7 1133.3,862.7 1167.3,811.7 1201.0,744.0 1234.3,749.0 1268.3,657.3 1301.7,671.7 1335.7,665.0 1369.3,657.3 1403.3,605.0 1437.3,628.3 1471.0,680.0" fill="none" stroke="#22bb22" stroke-width="1.3" stroke-linejoin="miter" /><rect x="38" y="892" width="134.5" height="9" fill="url(#hatchG)"/><rect x="172.5" y="892" width="201.5" height="9" fill="url(#hatchR)"/><rect x="374" y="892" width="608" height="9" fill="url(#hatchG)"/><rect x="982" y="892" width="301" height="9" fill="url(#hatchR)"/><rect x="1283" y="892" width="217" height="9" fill="url(#hatchG)"/><path d="M96 892 Q101 897 106 892" fill="none" stroke="#2020ff" stroke-width="1.8"/><path d="M264.5 892 Q269.5 897 274.5 892" fill="none" stroke="#2020ff" stroke-width="1.8"/><path d="M670 892 Q675 897 680 892" fill="none" stroke="#2020ff" stroke-width="1.8"/><path d="M1125 892 Q1130 897 1135 892" fill="none" stroke="#2020ff" stroke-width="1.8"/><path d="M1386.6 892 Q1391.6 897 1396.6 892" fill="none" stroke="#2020ff" stroke-width="1.8"/><line x1="1302.3" y1="134" x2="1302.3" y2="206" stroke="#00a000" stroke-width="1.3"/><line x1="1471" y1="134" x2="1471" y2="206" stroke="#ff2020" stroke-width="1.3" stroke-dasharray="3,3"/><line x1="1302.3" y1="239" x2="1302.3" y2="323" stroke="#00a000" stroke-width="1.3"/><line x1="1471" y1="239" x2="1471" y2="323" stroke="#ff2020" stroke-width="1.3" stroke-dasharray="3,3"/><line x1="1302.3" y1="356" x2="1302.3" y2="501" stroke="#00a000" stroke-width="1.3"/><line x1="1471" y1="356" x2="1471" y2="501" stroke="#ff2020" stroke-width="1.3" stroke-dasharray="3,3"/><line x1="1302.3" y1="535" x2="1302.3" y2="893" stroke="#00a000" stroke-width="1.3"/><line x1="1471" y1="535" x2="1471" y2="893" stroke="#ff2020" stroke-width="1.3" stroke-dasharray="3,3"/><path d="M1287.7 761.7 L1302.3 748.3 L1312.3 761.7 L1305 761.7 L1305 777.3 L1298 777.3 L1298 761.7 Z" fill="#00a000"/><text x="1240.5" y="809.5" font-family='"Liberation Sans", sans-serif' font-size="15" fill="#33cc33" textLength="135" lengthAdjust="spacingAndGlyphs">Compra Tendencial</text><path d="M1460.7 560.7 L1467 560.7 L1467 548.3 L1474 548.3 L1474 560.7 L1479.3 560.7 L1470 570.7 Z" fill="#ff2020"/><text x="1491.5" y="564.5" font-family='"Liberation Sans", sans-serif' font-size="15" fill="#ff2020" textLength="121" lengthAdjust="spacingAndGlyphs">Venda Oscilatória</text><text x="68" y="122" font-family='"Liberation Sans", sans-serif' font-size="14.5" fill="#555a60" textLength="191.0" lengthAdjust="spacingAndGlyphs">Nova Maquineta Tendência (</text><text x="259" y="122" font-family='"Liberation Sans", sans-serif' font-size="14.5" fill="#3cc83c" textLength="49.6" lengthAdjust="spacingAndGlyphs">1.00000,</text><text x="314.2" y="122" font-family='"Liberation Sans", sans-serif' font-size="14.5" fill="#ff2030" textLength="44.1" lengthAdjust="spacingAndGlyphs">0.0000,</text><text x="363" y="122" font-family='"Liberation Sans", sans-serif' font-size="14.5" fill="#eaea30" textLength="40.3" lengthAdjust="spacingAndGlyphs">0.0000</text><text x="407" y="122" font-family='"Liberation Sans", sans-serif' font-size="14.5" fill="#555a60" textLength="4.0" lengthAdjust="spacingAndGlyphs">)</text><text x="68" y="227" font-family='"Liberation Sans", sans-serif' font-size="14.5" fill="#555a60" textLength="173.0" lengthAdjust="spacingAndGlyphs">Maquineta Tendência Alt (</text><text x="241" y="227" font-family='"Liberation Sans", sans-serif' font-size="14.5" fill="#f0c830" textLength="51.6" lengthAdjust="spacingAndGlyphs">45.0537,</text><text x="298" y="227" font-family='"Liberation Sans", sans-serif' font-size="14.5" fill="#3cc83c" textLength="57.5" lengthAdjust="spacingAndGlyphs">-13.9657,</text><text x="360" y="227" font-family='"Liberation Sans", sans-serif' font-size="14.5" fill="#ff2030" textLength="51.0" lengthAdjust="spacingAndGlyphs">152.119,</text><text x="416.6" y="227" font-family='"Liberation Sans", sans-serif' font-size="14.5" fill="#ff7a40" textLength="50.4" lengthAdjust="spacingAndGlyphs">183.207,</text><text x="473" y="227" font-family='"Liberation Sans", sans-serif' font-size="14.5" fill="#f4f0d0" textLength="173.0" lengthAdjust="spacingAndGlyphs">767.545, -767.545, 1,500.00,</text><text x="652" y="227" font-family='"Liberation Sans", sans-serif' font-size="14.5" fill="#8ccce8" textLength="45.0" lengthAdjust="spacingAndGlyphs">0.0, 0.0</text><text x="700" y="227" font-family='"Liberation Sans", sans-serif' font-size="14.5" fill="#555a60" textLength="3.6" lengthAdjust="spacingAndGlyphs">)</text><text x="68" y="344" font-family='"Liberation Sans", sans-serif' font-size="14.5" fill="#555a60" textLength="147.0" lengthAdjust="spacingAndGlyphs">Maquineta Oscilação (</text><text x="215" y="344" font-family='"Liberation Sans", sans-serif' font-size="14.5" fill="#eaea30" textLength="42.0" lengthAdjust="spacingAndGlyphs">-0.000,</text><text x="263" y="344" font-family='"Liberation Sans", sans-serif' font-size="14.5" fill="#f4f0d0" textLength="51.0" lengthAdjust="spacingAndGlyphs">12.8474,</text><text x="319" y="344" font-family='"Liberation Sans", sans-serif' font-size="14.5" fill="#101010" textLength="57.7" lengthAdjust="spacingAndGlyphs">-10.0000,</text><text x="382" y="344" font-family='"Liberation Sans", sans-serif' font-size="14.5" fill="#a01010" textLength="53.0" lengthAdjust="spacingAndGlyphs">-10.0000</text><text x="440" y="344" font-family='"Liberation Sans", sans-serif' font-size="14.5" fill="#555a60" textLength="4.0" lengthAdjust="spacingAndGlyphs">)</text><text x="68" y="523" font-family='"Liberation Sans", sans-serif' font-size="14.5" fill="#555a60" textLength="98.5" lengthAdjust="spacingAndGlyphs">S&amp;P 500 INDEX</text><text x="171.7" y="523" font-family='"Liberation Sans", sans-serif' font-size="14.5" fill="#ff7a40" textLength="304.1" lengthAdjust="spacingAndGlyphs">(3,883.33, 3,884.99, 3,850.96, 3,854.56, -28.7400)</text><text x="476" y="523" font-family='"Liberation Sans", sans-serif' font-size="14.5" fill="#555a60" textLength="111.5" lengthAdjust="spacingAndGlyphs">, Forecast Prices (</text><text x="588" y="523" font-family='"Liberation Sans", sans-serif' font-size="14.5" fill="#ff2030" textLength="56.0" lengthAdjust="spacingAndGlyphs">3,853.29,</text><text x="649" y="523" font-family='"Liberation Sans", sans-serif' font-size="14.5" fill="#3cc83c" textLength="53.0" lengthAdjust="spacingAndGlyphs">3,837.83</text><text x="705.5" y="523" font-family='"Liberation Sans", sans-serif' font-size="14.5" fill="#555a60" textLength="4.0" lengthAdjust="spacingAndGlyphs">)</text><line x1="1859" y1="134" x2="1859" y2="206" stroke="#e8e8e8" stroke-width="1.5"/><line x1="1859" y1="140" x2="1870" y2="140" stroke="#e8e8e8" stroke-width="1.3"/><line x1="1859" y1="155" x2="1864" y2="155" stroke="#e8e8e8" stroke-width="1.3"/><line x1="1859" y1="170" x2="1870" y2="170" stroke="#e8e8e8" stroke-width="1.3"/><line x1="1859" y1="185" x2="1864" y2="185" stroke="#e8e8e8" stroke-width="1.3"/><line x1="1859" y1="200" x2="1870" y2="200" stroke="#e8e8e8" stroke-width="1.3"/><text x="1916" y="177.2" text-anchor="end" font-family='"Liberation Sans", sans-serif' font-size="14.5" fill="#e8e8e8">0</text><line x1="1859" y1="239" x2="1859" y2="323" stroke="#e8e8e8" stroke-width="1.5"/><line x1="1859" y1="246.7" x2="1864" y2="246.7" stroke="#e8e8e8" stroke-width="1.3"/><line x1="1859" y1="258.3" x2="1870" y2="258.3" stroke="#e8e8e8" stroke-width="1.3"/><line x1="1859" y1="270" x2="1864" y2="270" stroke="#e8e8e8" stroke-width="1.3"/><line x1="1859" y1="281.7" x2="1870" y2="281.7" stroke="#e8e8e8" stroke-width="1.3"/><line x1="1859" y1="293.3" x2="1864" y2="293.3" stroke="#e8e8e8" stroke-width="1.3"/><line x1="1859" y1="305" x2="1870" y2="305" stroke="#e8e8e8" stroke-width="1.3"/><line x1="1859" y1="316.7" x2="1864" y2="316.7" stroke="#e8e8e8" stroke-width="1.3"/><text x="1916" y="264.5" text-anchor="end" font-family='"Liberation Sans", sans-serif' font-size="14.5" fill="#e8e8e8">1000</text><text x="1916" y="288.2" text-anchor="end" font-family='"Liberation Sans", sans-serif' font-size="14.5" fill="#e8e8e8">0</text><text x="1916" y="311.9" text-anchor="end" font-family='"Liberation Sans", sans-serif' font-size="14.5" fill="#e8e8e8">-1000</text><line x1="1859" y1="358" x2="1859" y2="500" stroke="#e8e8e8" stroke-width="1.5"/><line x1="1859" y1="500.4" x2="1870" y2="500.4" stroke="#e8e8e8" stroke-width="1.3"/><line x1="1859" y1="489.5" x2="1864" y2="489.5" stroke="#e8e8e8" stroke-width="1.3"/><line x1="1859" y1="478.6" x2="1870" y2="478.6" stroke="#e8e8e8" stroke-width="1.3"/><line x1="1859" y1="467.7" x2="1864" y2="467.7" stroke="#e8e8e8" stroke-width="1.3"/><line x1="1859" y1="456.8" x2="1870" y2="456.8" stroke="#e8e8e8" stroke-width="1.3"/><line x1="1859" y1="445.9" x2="1864" y2="445.9" stroke="#e8e8e8" stroke-width="1.3"/><line x1="1859" y1="435.0" x2="1870" y2="435.0" stroke="#e8e8e8" stroke-width="1.3"/><line x1="1859" y1="424.1" x2="1864" y2="424.1" stroke="#e8e8e8" stroke-width="1.3"/><line x1="1859" y1="413.2" x2="1870" y2="413.2" stroke="#e8e8e8" stroke-width="1.3"/><line x1="1859" y1="402.3" x2="1864" y2="402.3" stroke="#e8e8e8" stroke-width="1.3"/><line x1="1859" y1="391.4" x2="1870" y2="391.4" stroke="#e8e8e8" stroke-width="1.3"/><line x1="1859" y1="380.5" x2="1864" y2="380.5" stroke="#e8e8e8" stroke-width="1.3"/><line x1="1859" y1="369.6" x2="1870" y2="369.6" stroke="#e8e8e8" stroke-width="1.3"/><text x="1916" y="375.2" text-anchor="end" font-family='"Liberation Sans", sans-serif' font-size="14.5" fill="#e8e8e8">30</text><text x="1916" y="396.9" text-anchor="end" font-family='"Liberation Sans", sans-serif' font-size="14.5" fill="#e8e8e8">20</text><text x="1916" y="419.2" text-anchor="end" font-family='"Liberation Sans", sans-serif' font-size="14.5" fill="#e8e8e8">10</text><text x="1916" y="440.2" text-anchor="end" font-family='"Liberation Sans", sans-serif' font-size="14.5" fill="#e8e8e8">0</text><text x="1916" y="463.2" text-anchor="end" font-family='"Liberation Sans", sans-serif' font-size="14.5" fill="#e8e8e8">-10</text><text x="1916" y="484.2" text-anchor="end" font-family='"Liberation Sans", sans-serif' font-size="14.5" fill="#e8e8e8">-20</text><line x1="1859" y1="537" x2="1859" y2="890" stroke="#e8e8e8" stroke-width="1.5"/><line x1="1859" y1="881.8" x2="1864" y2="881.8" stroke="#e8e8e8" stroke-width="1.3"/><line x1="1859" y1="869.0" x2="1864" y2="869.0" stroke="#e8e8e8" stroke-width="1.3"/><line x1="1859" y1="856.3" x2="1870" y2="856.3" stroke="#e8e8e8" stroke-width="1.3"/><line x1="1859" y1="843.6" x2="1864" y2="843.6" stroke="#e8e8e8" stroke-width="1.3"/><line x1="1859" y1="830.8" x2="1864" y2="830.8" stroke="#e8e8e8" stroke-width="1.3"/><line x1="1859" y1="818.1" x2="1864" y2="818.1" stroke="#e8e8e8" stroke-width="1.3"/><line x1="1859" y1="805.4" x2="1864" y2="805.4" stroke="#e8e8e8" stroke-width="1.3"/><line x1="1859" y1="792.6" x2="1870" y2="792.6" stroke="#e8e8e8" stroke-width="1.3"/><line x1="1859" y1="779.9" x2="1864" y2="779.9" stroke="#e8e8e8" stroke-width="1.3"/><line x1="1859" y1="767.2" x2="1864" y2="767.2" stroke="#e8e8e8" stroke-width="1.3"/><line x1="1859" y1="754.4" x2="1864" y2="754.4" stroke="#e8e8e8" stroke-width="1.3"/><line x1="1859" y1="741.7" x2="1864" y2="741.7" stroke="#e8e8e8" stroke-width="1.3"/><line x1="1859" y1="729.0" x2="1870" y2="729.0" stroke="#e8e8e8" stroke-width="1.3"/><line x1="1859" y1="716.2" x2="1864" y2="716.2" stroke="#e8e8e8" stroke-width="1.3"/><line x1="1859" y1="703.5" x2="1864" y2="703.5" stroke="#e8e8e8" stroke-width="1.3"/><line x1="1859" y1="690.8" x2="1864" y2="690.8" stroke="#e8e8e8" stroke-width="1.3"/><line x1="1859" y1="678.0" x2="1864" y2="678.0" stroke="#e8e8e8" stroke-width="1.3"/><line x1="1859" y1="665.3" x2="1870" y2="665.3" stroke="#e8e8e8" stroke-width="1.3"/><line x1="1859" y1="652.6" x2="1864" y2="652.6" stroke="#e8e8e8" stroke-width="1.3"/><line x1="1859" y1="639.8" x2="1864" y2="639.8" stroke="#e8e8e8" stroke-width="1.3"/><line x1="1859" y1="627.1" x2="1864" y2="627.1" stroke="#e8e8e8" stroke-width="1.3"/><line x1="1859" y1="614.4" x2="1864" y2="614.4" stroke="#e8e8e8" stroke-width="1.3"/><line x1="1859" y1="601.6" x2="1870" y2="601.6" stroke="#e8e8e8" stroke-width="1.3"/><line x1="1859" y1="588.9" x2="1864" y2="588.9" stroke="#e8e8e8" stroke-width="1.3"/><line x1="1859" y1="576.2" x2="1864" y2="576.2" stroke="#e8e8e8" stroke-width="1.3"/><line x1="1859" y1="563.4" x2="1864" y2="563.4" stroke="#e8e8e8" stroke-width="1.3"/><line x1="1859" y1="550.7" x2="1864" y2="550.7" stroke="#e8e8e8" stroke-width="1.3"/><text x="1916" y="607.2" text-anchor="end" font-family='"Liberation Sans", sans-serif' font-size="14.5" fill="#e8e8e8">3900</text><text x="1916" y="670.7" text-anchor="end" font-family='"Liberation Sans", sans-serif' font-size="14.5" fill="#e8e8e8">3850</text><text x="1916" y="734.2" text-anchor="end" font-family='"Liberation Sans", sans-serif' font-size="14.5" fill="#e8e8e8">3800</text><text x="1916" y="797.8" text-anchor="end" font-family='"Liberation Sans", sans-serif' font-size="14.5" fill="#e8e8e8">3750</text><text x="1916" y="861.5" text-anchor="end" font-family='"Liberation Sans", sans-serif' font-size="14.5" fill="#e8e8e8">3700</text><rect x="1863.5" y="648.5" width="60" height="20" fill="#000" stroke="#d0d0d0" stroke-width="1.2"/><text x="1866" y="663" font-family='"Liberation Sans", sans-serif' font-size="13" fill="#ff1010" textLength="56" lengthAdjust="spacingAndGlyphs">3854.560</text><rect x="38" y="900.5" width="1821" height="42" fill="#000"/><rect x="1859" y="900.5" width="61" height="42" fill="#f0f0f0"/><line x1="38" y1="901.5" x2="1859" y2="901.5" stroke="#e8e8e8" stroke-width="1.5"/><line x1="38" y1="922" x2="1859" y2="922" stroke="#e8e8e8" stroke-width="1.5"/><line x1="54.3" y1="901" x2="54.3" y2="922" stroke="#e8e8e8" stroke-width="1.5"/><text x="57.3" y="917.5" font-family='"Liberation Sans", sans-serif' font-size="14.5" fill="#e8e8e8">1</text><line x1="88.0" y1="901" x2="88.0" y2="907" stroke="#e8e8e8" stroke-width="1.3"/><line x1="121.8" y1="901" x2="121.8" y2="907" stroke="#e8e8e8" stroke-width="1.3"/><line x1="155.5" y1="901" x2="155.5" y2="907" stroke="#e8e8e8" stroke-width="1.3"/><line x1="189.2" y1="901" x2="189.2" y2="922" stroke="#e8e8e8" stroke-width="1.5"/><text x="192.2" y="917.5" font-family='"Liberation Sans", sans-serif' font-size="14.5" fill="#e8e8e8">5</text><line x1="222.9" y1="901" x2="222.9" y2="907" stroke="#e8e8e8" stroke-width="1.3"/><line x1="256.7" y1="901" x2="256.7" y2="907" stroke="#e8e8e8" stroke-width="1.3"/><line x1="290.4" y1="901" x2="290.4" y2="907" stroke="#e8e8e8" stroke-width="1.3"/><line x1="324.1" y1="901" x2="324.1" y2="922" stroke="#e8e8e8" stroke-width="1.5"/><text x="327.1" y="917.5" font-family='"Liberation Sans", sans-serif' font-size="14.5" fill="#e8e8e8">6</text><line x1="357.9" y1="901" x2="357.9" y2="907" stroke="#e8e8e8" stroke-width="1.3"/><line x1="391.6" y1="901" x2="391.6" y2="907" stroke="#e8e8e8" stroke-width="1.3"/><line x1="425.3" y1="901" x2="425.3" y2="907" stroke="#e8e8e8" stroke-width="1.3"/><line x1="459.1" y1="901" x2="459.1" y2="922" stroke="#e8e8e8" stroke-width="1.5"/><text x="462.1" y="917.5" font-family='"Liberation Sans", sans-serif' font-size="14.5" fill="#e8e8e8">7</text><line x1="492.8" y1="901" x2="492.8" y2="907" stroke="#e8e8e8" stroke-width="1.3"/><line x1="526.5" y1="901" x2="526.5" y2="907" stroke="#e8e8e8" stroke-width="1.3"/><line x1="560.2" y1="901" x2="560.2" y2="907" stroke="#e8e8e8" stroke-width="1.3"/><line x1="594.0" y1="901" x2="594.0" y2="922" stroke="#e8e8e8" stroke-width="1.5"/><text x="597.0" y="917.5" font-family='"Liberation Sans", sans-serif' font-size="14.5" fill="#e8e8e8">8</text><line x1="627.7" y1="901" x2="627.7" y2="907" stroke="#e8e8e8" stroke-width="1.3"/><line x1="661.4" y1="901" x2="661.4" y2="907" stroke="#e8e8e8" stroke-width="1.3"/><line x1="695.2" y1="901" x2="695.2" y2="907" stroke="#e8e8e8" stroke-width="1.3"/><line x1="728.9" y1="901" x2="728.9" y2="922" stroke="#e8e8e8" stroke-width="1.5"/><text x="731.9" y="917.5" font-family='"Liberation Sans", sans-serif' font-size="14.5" fill="#e8e8e8">11</text><line x1="762.6" y1="901" x2="762.6" y2="907" stroke="#e8e8e8" stroke-width="1.3"/><line x1="796.4" y1="901" x2="796.4" y2="907" stroke="#e8e8e8" stroke-width="1.3"/><line x1="830.1" y1="901" x2="830.1" y2="907" stroke="#e8e8e8" stroke-width="1.3"/><line x1="863.8" y1="901" x2="863.8" y2="922" stroke="#e8e8e8" stroke-width="1.5"/><text x="866.8" y="917.5" font-family='"Liberation Sans", sans-serif' font-size="14.5" fill="#e8e8e8">12</text><line x1="897.5" y1="901" x2="897.5" y2="907" stroke="#e8e8e8" stroke-width="1.3"/><line x1="931.3" y1="901" x2="931.3" y2="907" stroke="#e8e8e8" stroke-width="1.3"/><line x1="965.0" y1="901" x2="965.0" y2="907" stroke="#e8e8e8" stroke-width="1.3"/><line x1="998.7" y1="901" x2="998.7" y2="922" stroke="#e8e8e8" stroke-width="1.5"/><text x="1001.7" y="917.5" font-family='"Liberation Sans", sans-serif' font-size="14.5" fill="#e8e8e8">13</text><line x1="1032.5" y1="901" x2="1032.5" y2="907" stroke="#e8e8e8" stroke-width="1.3"/><line x1="1066.2" y1="901" x2="1066.2" y2="907" stroke="#e8e8e8" stroke-width="1.3"/><line x1="1099.9" y1="901" x2="1099.9" y2="907" stroke="#e8e8e8" stroke-width="1.3"/><line x1="1133.7" y1="901" x2="1133.7" y2="922" stroke="#e8e8e8" stroke-width="1.5"/><text x="1136.7" y="917.5" font-family='"Liberation Sans", sans-serif' font-size="14.5" fill="#e8e8e8">14</text><line x1="1167.4" y1="901" x2="1167.4" y2="907" stroke="#e8e8e8" stroke-width="1.3"/><line x1="1201.1" y1="901" x2="1201.1" y2="907" stroke="#e8e8e8" stroke-width="1.3"/><line x1="1234.8" y1="901" x2="1234.8" y2="907" stroke="#e8e8e8" stroke-width="1.3"/><line x1="1268.6" y1="901" x2="1268.6" y2="922" stroke="#e8e8e8" stroke-width="1.5"/><text x="1271.6" y="917.5" font-family='"Liberation Sans", sans-serif' font-size="14.5" fill="#e8e8e8">15</text><line x1="1302.3" y1="901" x2="1302.3" y2="907" stroke="#e8e8e8" stroke-width="1.3"/><line x1="1336.0" y1="901" x2="1336.0" y2="907" stroke="#e8e8e8" stroke-width="1.3"/><line x1="1369.8" y1="901" x2="1369.8" y2="907" stroke="#e8e8e8" stroke-width="1.3"/><line x1="1403.5" y1="901" x2="1403.5" y2="922" stroke="#e8e8e8" stroke-width="1.5"/><text x="1406.5" y="917.5" font-family='"Liberation Sans", sans-serif' font-size="14.5" fill="#e8e8e8">18</text><line x1="1437.2" y1="901" x2="1437.2" y2="907" stroke="#e8e8e8" stroke-width="1.3"/><line x1="1471.0" y1="901" x2="1471.0" y2="907" stroke="#e8e8e8" stroke-width="1.3"/><line x1="1504.7" y1="901" x2="1504.7" y2="907" stroke="#e8e8e8" stroke-width="1.3"/><line x1="1538.4" y1="901" x2="1538.4" y2="907" stroke="#e8e8e8" stroke-width="1.3"/><line x1="1572.1" y1="901" x2="1572.1" y2="907" stroke="#e8e8e8" stroke-width="1.3"/><line x1="1605.9" y1="901" x2="1605.9" y2="907" stroke="#e8e8e8" stroke-width="1.3"/><line x1="1639.6" y1="901" x2="1639.6" y2="922" stroke="#e8e8e8" stroke-width="1.5"/><text x="1642.6" y="917.5" font-family='"Liberation Sans", sans-serif' font-size="14.5" fill="#e8e8e8">19</text><line x1="1673.3" y1="901" x2="1673.3" y2="907" stroke="#e8e8e8" stroke-width="1.3"/><line x1="1707.1" y1="901" x2="1707.1" y2="907" stroke="#e8e8e8" stroke-width="1.3"/><line x1="1740.8" y1="901" x2="1740.8" y2="907" stroke="#e8e8e8" stroke-width="1.3"/><line x1="1774.5" y1="901" x2="1774.5" y2="907" stroke="#e8e8e8" stroke-width="1.3"/><line x1="1808.3" y1="901" x2="1808.3" y2="907" stroke="#e8e8e8" stroke-width="1.3"/><line x1="1842.0" y1="901" x2="1842.0" y2="907" stroke="#e8e8e8" stroke-width="1.3"/><line x1="54.5" y1="922" x2="54.5" y2="942" stroke="#e8e8e8" stroke-width="1.5"/><text x="57" y="937.5" font-family='"Liberation Sans", sans-serif' font-size="14.5" fill="#e8e8e8">July</text><rect x="37" y="941.2" width="1822" height="1.5" fill="#555"/><circle cx="1889" cy="920" r="9" fill="none" stroke="#22e022" stroke-width="1.6"/><circle cx="1885.5" cy="917.5" r="1.3" fill="#22e022"/><circle cx="1892.5" cy="917.5" r="1.3" fill="#22e022"/><path d="M1884 922 Q1889 927 1894 922" fill="none" stroke="#22e022" stroke-width="1.5"/><rect x="0" y="112" width="35" height="7" fill="#d4d4d4"/><rect x="15" y="114" width="3" height="3" fill="#666"/><rect x="0.5" y="123" width="30" height="30" rx="2" fill="#e4f0fc" stroke="#a8d0f8" stroke-width="1.2"/><path d="M7 128 L7 146 L11 142 L15 150 L18 148.5 L14 140.5 L20 140.5 Z" fill="#6ab4f0" stroke="#1a5aa0" stroke-width="1.3" stroke-linejoin="round"/><rect x="2" y="159" width="23.5" height="24" rx="1" fill="url(#btn)" stroke="#c4c4c4" stroke-width="1"/><path d="M14 163 L14 179 M6 171 L22 171" stroke="#444" stroke-width="2"/><line x1="2" y1="190" x2="26" y2="190" stroke="#b8b8b8"/><rect x="2" y="199" width="23.5" height="24" rx="1" fill="url(#btn)" stroke="#c4c4c4" stroke-width="1"/><line x1="6" y1="203" x2="22" y2="219" stroke="#333" stroke-width="1.8"/><rect x="2" y="232" width="23.5" height="23" rx="1" fill="url(#btn)" stroke="#c4c4c4" stroke-width="1"/><line x1="5" y1="243.5" x2="23" y2="243.5" stroke="#444" stroke-width="2"/><rect x="2" y="264" width="23.5" height="23" rx="1" fill="url(#btn)" stroke="#c4c4c4" stroke-width="1"/><line x1="14" y1="268" x2="14" y2="283" stroke="#444" stroke-width="2"/><rect x="2" y="296" width="23.5" height="24" rx="1" fill="url(#btn)" stroke="#c4c4c4" stroke-width="1"/><line x1="5" y1="299" x2="22" y2="317" stroke="#333" stroke-width="1.5"/><text x="4" y="318" font-family='"Liberation Sans", sans-serif' font-size="9" fill="#333">S</text><text x="17" y="306" font-family='"Liberation Sans", sans-serif' font-size="9" fill="#333">L</text><line x1="2" y1="334" x2="26" y2="334" stroke="#b8b8b8"/><rect x="0" y="340" width="35" height="9" fill="#d4d4d4"/><rect x="15" y="343" width="3" height="3" fill="#666"/><rect x="0.5" y="352.5" width="12.5" height="30.5" fill="#eee" stroke="#c4c4c4"/><rect x="15.5" y="352.5" width="14" height="30.5" fill="#eee" stroke="#c4c4c4"/><path d="M8 364 L4 367.5 L8 371 Z" fill="#111"/><path d="M20.5 364 L24.5 367.5 L20.5 371 Z" fill="#111"/><line x1="2" y1="387" x2="26" y2="387" stroke="#b8b8b8"/><rect x="2" y="395.5" width="23.5" height="23.5" rx="1" fill="url(#btn)" stroke="#c4c4c4" stroke-width="1"/><text x="4.5" y="412" font-family='"Liberation Sans", sans-serif' font-size="12" fill="#333" textLength="20" lengthAdjust="spacingAndGlyphs">abc</text><rect x="2.5" y="428.5" width="23" height="23" fill="#f4f4f4" stroke="#bbb"/><path d="M10 429 L10 451 M18 429 L18 451 M3 436 L25 436 M3 444 L25 444" stroke="#999" stroke-width="1.3"/><line x1="2" y1="459" x2="26" y2="459" stroke="#b8b8b8"/><ellipse cx="13.5" cy="479.5" rx="11" ry="7" fill="#e4e8ec" stroke="#555" stroke-width="1.2"/><rect x="3" y="505.5" width="22" height="15" rx="1" fill="url(#btn)" stroke="#555" stroke-width="1.2"/><path d="M2.5 552 L13.5 537 L24.5 552 Z" fill="#f4f4f4" stroke="#555" stroke-width="1.2"/><rect x="37" y="942.7" width="1883" height="28.3" fill="#efefef"/><rect x="37" y="943.2" width="1883" height="1.6" fill="#fbfbfb"/><rect x="1540.5" y="953.5" width="105" height="6" fill="#8a8a8a"/><line x1="1670" y1="946" x2="1670" y2="966" stroke="#888" stroke-width="1.3"/><line x1="1730" y1="946" x2="1730" y2="966" stroke="#888" stroke-width="1.3"/><line x1="1842.5" y1="946" x2="1842.5" y2="966" stroke="#888" stroke-width="1.3"/><path d="M1680 955 A6.5 6.5 0 0 1 1692 952" fill="none" stroke="#444" stroke-width="2.5"/><path d="M1693 948 L1693.5 955 L1687 953 Z" fill="#444"/><path d="M1692 958 A6.5 6.5 0 0 1 1680 961" fill="none" stroke="#444" stroke-width="2.5"/><path d="M1679 964 L1678.5 957 L1685 959 Z" fill="#444"/><text x="1707" y="962" font-family='"Liberation Sans", sans-serif' font-size="15" font-weight="bold" fill="#444">C</text><path d="M1747 950 L1747 963" stroke="#444" stroke-width="2"/><path d="M1743 953 L1747 948 L1751 953 Z M1743 960 L1747 965 L1751 960 Z" fill="#444"/><path d="M1773 949 L1773 966 M1764.5 957.5 L1781.5 957.5" stroke="#444" stroke-width="2"/><path d="M1769.5 952 L1773 947.5 L1776.5 952 Z M1769.5 963 L1773 967.5 L1776.5 963 Z M1768 954 L1763.5 957.5 L1768 961 Z M1778 954 L1782.5 957.5 L1778 961 Z" fill="#444"/><circle cx="1799" cy="956.5" r="6.3" fill="none" stroke="#555" stroke-width="1.3"/><line x1="1795.5" y1="956.5" x2="1802.5" y2="956.5" stroke="#444" stroke-width="2"/><circle cx="1825" cy="956.5" r="6.3" fill="none" stroke="#555" stroke-width="1.3"/><path d="M1821.5 956.5 L1828.5 956.5 M1825 953 L1825 960" stroke="#444" stroke-width="2"/><path d="M1861.5 952.5 L1857 956.5 L1861.5 960.5 Z" fill="#c8c8c8"/><path d="M1883 952.5 L1887.5 956.5 L1883 960.5 Z" fill="#b0b0b0"/><rect x="1903.5" y="949.5" width="13" height="13" fill="#fff" stroke="#555" stroke-width="1.2"/><path d="M1904 953 L1916 953 M1906 956 L1915 956 M1906 959 L1915 959" stroke="#555"/><rect x="0" y="971" width="1920" height="42" fill="#e8e8e8"/><rect x="0" y="971.5" width="1920" height="2.3" fill="#f6f6f6"/><rect x="0" y="975" width="9" height="35" fill="#d4d4d4"/><rect x="3" y="991" width="3" height="3" fill="#666"/><rect x="10.5" y="981" width="161" height="24.5" rx="2" fill="#fff" stroke="#a8a8a8" stroke-width="1.2"/><line x1="30" y1="993.5" x2="131" y2="993.5" stroke="#333" stroke-width="1.5"/><path d="M156 990 L161 995 L166 990" fill="none" stroke="#444" stroke-width="1.3"/><line x1="176" y1="978" x2="176" y2="1008" stroke="#a8a8a8"/><rect x="180.5" y="981" width="124" height="24.5" rx="2" fill="#fff" stroke="#a8a8a8" stroke-width="1.2"/><path d="M289 990 L294 995 L299 990" fill="none" stroke="#444" stroke-width="1.3"/><line x1="313.5" y1="974" x2="313.5" y2="1010" stroke="#a8a8a8"/><rect x="320" y="974" width="10" height="36" fill="#d4d4d4"/><rect x="323.5" y="991" width="3" height="3" fill="#666"/><rect x="334.6" y="980.3" width="12" height="12" fill="#e0e0f8" stroke="#c8c8c8" stroke-width="0.8"/><rect x="334.6" y="995.6" width="12" height="12" fill="#800000" stroke="#c8c8c8" stroke-width="0.8"/><rect x="349.7" y="980.3" width="12" height="12" fill="#ffd000" stroke="#c8c8c8" stroke-width="0.8"/><rect x="349.7" y="995.6" width="12" height="12" fill="#6a8890" stroke="#c8c8c8" stroke-width="0.8"/><rect x="364.7" y="980.3" width="12" height="12" fill="#ffff00" stroke="#c8c8c8" stroke-width="0.8"/><rect x="364.7" y="995.6" width="12" height="12" fill="#0000ff" stroke="#c8c8c8" stroke-width="0.8"/><rect x="379.8" y="980.3" width="12" height="12" fill="#707070" stroke="#c8c8c8" stroke-width="0.8"/><rect x="379.8" y="995.6" width="12" height="12" fill="#008800" stroke="#c8c8c8" stroke-width="0.8"/><rect x="394.9" y="980.3" width="12" height="12" fill="#33cc33" stroke="#c8c8c8" stroke-width="0.8"/><rect x="394.9" y="995.6" width="12" height="12" fill="#ff0000" stroke="#c8c8c8" stroke-width="0.8"/><rect x="410.0" y="980.3" width="12" height="12" fill="#fffde0" stroke="#c8c8c8" stroke-width="0.8"/><rect x="410.0" y="995.6" width="12" height="12" fill="#000000" stroke="#c8c8c8" stroke-width="0.8"/><rect x="425.0" y="980.3" width="12" height="12" fill="#ff6a20" stroke="#c8c8c8" stroke-width="0.8"/><rect x="425.0" y="995.6" width="12" height="12" fill="#3a7aa8" stroke="#c8c8c8" stroke-width="0.8"/><rect x="440.1" y="980.3" width="12" height="12" fill="#98f098" stroke="#c8c8c8" stroke-width="0.8"/><rect x="440.1" y="995.6" width="12" height="12" fill="#90d0e0" stroke="#c8c8c8" stroke-width="0.8"/><rect x="409" y="979" width="15" height="14.5" fill="none" stroke="#777" stroke-width="0.8" stroke-dasharray="1,1"/><path d="M454.5 993 L461.5 993 L458 997 Z" fill="#111"/><line x1="475" y1="974" x2="475" y2="1010" stroke="#a8a8a8"/><rect x="484" y="974" width="9" height="36" fill="#d4d4d4"/><rect x="486.5" y="991" width="3" height="3" fill="#666"/><rect x="499.0" y="987.5" width="19.5" height="15.5" rx="1" fill="#fff" stroke="#8aa8c8" stroke-width="1.2"/><path d="M501.0 999 L505.0 995 L508.0 998" fill="none" stroke="#e02020" stroke-width="1.2"/><text x="509.0" y="1001" font-family='"Liberation Sans", sans-serif' font-size="11" fill="#222">1</text><rect x="532.9" y="987.5" width="19.5" height="15.5" rx="1" fill="#fff" stroke="#8aa8c8" stroke-width="1.2"/><path d="M534.9 999 L538.9 995 L541.9 998" fill="none" stroke="#e02020" stroke-width="1.2"/><text x="542.9" y="1001" font-family='"Liberation Sans", sans-serif' font-size="11" fill="#222">2</text><rect x="566.8" y="987.5" width="19.5" height="15.5" rx="1" fill="#fff" stroke="#8aa8c8" stroke-width="1.2"/><path d="M568.8 999 L572.8 995 L575.8 998" fill="none" stroke="#e02020" stroke-width="1.2"/><text x="576.8" y="1001" font-family='"Liberation Sans", sans-serif' font-size="11" fill="#222">3</text><rect x="600.7" y="987.5" width="19.5" height="15.5" rx="1" fill="#fff" stroke="#8aa8c8" stroke-width="1.2"/><path d="M602.7 999 L606.7 995 L609.7 998" fill="none" stroke="#e02020" stroke-width="1.2"/><text x="610.7" y="1001" font-family='"Liberation Sans", sans-serif' font-size="11" fill="#222">4</text><rect x="634.6" y="987.5" width="19.5" height="15.5" rx="1" fill="#fff" stroke="#8aa8c8" stroke-width="1.2"/><path d="M636.6 999 L640.6 995 L643.6 998" fill="none" stroke="#e02020" stroke-width="1.2"/><text x="644.6" y="1001" font-family='"Liberation Sans", sans-serif' font-size="11" fill="#222">5</text><rect x="668.5" y="987.5" width="19.5" height="15.5" rx="1" fill="#fff" stroke="#8aa8c8" stroke-width="1.2"/><path d="M670.5 999 L674.5 995 L677.5 998" fill="none" stroke="#e02020" stroke-width="1.2"/><text x="678.5" y="1001" font-family='"Liberation Sans", sans-serif' font-size="11" fill="#222">6</text><line x1="703.7" y1="974" x2="703.7" y2="1010" stroke="#a8a8a8"/><rect x="0" y="1011" width="1920" height="1" fill="#8a8a8a"/><rect x="0" y="1012.2" width="1920" height="1.5" fill="#f0f0f0"/><rect x="0" y="1013.7" width="1920" height="6.3" fill="#3e3e3e"/><rect x="1844" y="1015" width="25" height="4" fill="#e8e8e8"/><rect x="1873" y="1015" width="26" height="4" fill="#e0e0e0"/><rect x="0" y="1020" width="1920" height="60" fill="#201d24"/><circle cx="40.5" cy="1050" r="12.5" fill="url(#sun)"/><text x="65" y="1046" font-family='"Liberation Sans", sans-serif' font-size="14" fill="#ffffff">22°C</text><text x="65" y="1066" font-family='"Liberation Sans", sans-serif' font-size="14" fill="#d8d8d8">Sol</text><linearGradient id="win" x1="0" y1="0" x2="1" y2="1"><stop offset="0" stop-color="#6ad8ff"/><stop offset="1" stop-color="#0a8ae8"/></linearGradient><linearGradient id="ms" x1="0" y1="0" x2="0" y2="1"><stop offset="0" stop-color="#8a8a8a"/><stop offset="0.75" stop-color="#000"/><stop offset="1" stop-color="#000"/></linearGradient><rect x="506" y="1036" width="14" height="14" rx="1" fill="url(#win)"/><rect x="521.5" y="1036" width="14" height="14" rx="1" fill="url(#win)"/><rect x="506" y="1051.5" width="14" height="14" rx="1" fill="url(#win)"/><rect x="521.5" y="1051.5" width="14" height="14" rx="1" fill="url(#win)"/><circle cx="578.5" cy="1047" r="10" fill="#3a3a3a" stroke="#e0e0e0" stroke-width="2.6"/><line x1="571" y1="1055" x2="564.5" y2="1062" stroke="#e0e0e0" stroke-width="3" stroke-linecap="round"/><circle cx="630.5" cy="1050" r="14" fill="#6a5ad8"/><path d="M618 1062 L616 1066 L624 1063 Z" fill="#6a5ad8"/><rect x="622" y="1044" width="12" height="11" rx="2" fill="#fff"/><path d="M634 1048 L639 1045 L639 1054 L634 1051 Z" fill="#fff"/><circle cx="685" cy="1050" r="14" fill="#dd4433"/><path d="M685 1050 L672.9 1057.0 A14 14 0 0 0 689.2 1063.3 Z" fill="#1e9a4a"/><path d="M685 1050 L689.2 1063.3 A14 14 0 0 0 698.3 1045.8 Z" fill="#f8c630"/><circle cx="685" cy="1050" r="6.4" fill="#fff"/><circle cx="685" cy="1050" r="5.0" fill="#3a7ae8"/><circle cx="696.5" cy="1039" r="10" fill="#e8600a"/><text x="691.5" y="1044" font-family='"Liberation Sans", sans-serif' font-size="11" font-weight="bold" fill="#fff">N</text><rect x="726" y="1035.5" width="30" height="30" rx="1.5" fill="url(#ms)"/><path d="M733.2 1063.5 L734 1051.5 L737 1051.5 L736.5 1063.5 Z M738 1063.5 L738.8 1044.5 L742.5 1044.5 L742 1063.5 Z M743 1063.5 L744 1037.5 L748 1037.5 L747 1063.5 Z" fill="#f88a18"/><path d="M781 1038 L793 1038 L796 1041 L810 1041 L810 1063 L781 1063 Z" fill="#f8c630"/><rect x="781" y="1044" width="30" height="19" rx="1" fill="#ffd84a"/><rect x="787" y="1058" width="18" height="5" rx="1" fill="#1a78d8"/><rect x="847" y="1038" width="17" height="24" fill="#fff" stroke="#2a5ab0" stroke-width="1"/><path d="M850 1043 L861 1043 M850 1047 L861 1047 M850 1051 L861 1051 M850 1055 L861 1055" stroke="#2a5ab0"/><path d="M837 1039 L852 1036 L852 1064 L837 1061 Z" fill="#2a5ab0"/><text x="838.5" y="1056" font-family='"Liberation Sans", sans-serif' font-size="12" font-weight="bold" fill="#fff">W</text><rect x="902" y="1038" width="17" height="24" fill="#fff" stroke="#d04a20" stroke-width="1"/><circle cx="910" cy="1047" r="4" fill="none" stroke="#d04a20" stroke-width="1.5"/><path d="M892 1039 L907 1036 L907 1064 L892 1061 Z" fill="#d84a22"/><text x="895" y="1056" font-family='"Liberation Sans", sans-serif' font-size="12" font-weight="bold" fill="#fff">P</text><path d="M953 1036 L967 1036 L973 1060 L947 1060 Z" fill="#f08a10"/><path d="M956 1044 L964 1044 L966 1050 L954 1050 Z" fill="#fff"/><rect x="944" y="1059" width="32" height="5" rx="1" fill="#f08a10"/><linearGradient id="edge" x1="0" y1="0" x2="1" y2="1"><stop offset="0" stop-color="#3ad0a0"/><stop offset="0.5" stop-color="#1a9ae8"/><stop offset="1" stop-color="#0a4aa0"/></linearGradient><circle cx="1015.5" cy="1050" r="15" fill="url(#edge)"/><path d="M1008 1052 Q1010 1042 1020 1044 Q1026 1047 1022 1053 L1012 1053 Q1014 1060 1024 1058 Q1018 1063 1012 1060 Q1006 1057 1008 1052 Z" fill="#202030"/><rect x="1068" y="1038" width="16" height="24" fill="#fff" stroke="#3a5ab8" stroke-width="1"/><path d="M1072 1045 L1080 1045 M1074 1052 L1080 1052" stroke="#3a5ab8" stroke-width="1.5"/><path d="M1057 1039 L1073 1036 L1073 1064 L1057 1061 Z" fill="#3a5ab8"/><text x="1060" y="1056" font-family='"Liberation Sans", sans-serif' font-size="12" font-weight="bold" fill="#fff">V</text><rect x="1123" y="1038" width="16" height="24" fill="#fff" stroke="#1a7a40" stroke-width="1"/><path d="M1127 1043 L1136 1043 M1127 1047 L1136 1047 M1127 1051 L1136 1051 M1127 1055 L1136 1055 M1131 1040 L1131 1060" stroke="#1a7a40"/><path d="M1112 1039 L1128 1036 L1128 1064 L1112 1061 Z" fill="#1a7a40"/><text x="1115" y="1056" font-family='"Liberation Sans", sans-serif' font-size="12" font-weight="bold" fill="#fff">X</text><circle cx="1180.5" cy="1050" r="14" fill="#dd4433"/><path d="M1180.5 1050 L1168.4 1057.0 A14 14 0 0 0 1184.7 1063.3 Z" fill="#1e9a4a"/><path d="M1180.5 1050 L1184.7 1063.3 A14 14 0 0 0 1193.8 1045.8 Z" fill="#f8c630"/><circle cx="1180.5" cy="1050" r="6.4" fill="#fff"/><circle cx="1180.5" cy="1050" r="5.0" fill="#3a7ae8"/><rect x="1224" y="1035.5" width="23" height="29" rx="2" fill="#8a9098"/><rect x="1227" y="1038" width="17" height="5" fill="#4ac8f0"/><rect x="1227" y="1046" width="4.5" height="4.5" fill="#dde"/><rect x="1233" y="1046" width="4.5" height="4.5" fill="#dde"/><rect x="1239" y="1046" width="4.5" height="4.5" fill="#dde"/><rect x="1227" y="1052" width="4.5" height="4.5" fill="#dde"/><rect x="1233" y="1052" width="4.5" height="4.5" fill="#dde"/><rect x="1239" y="1052" width="4.5" height="4.5" fill="#dde"/><rect x="1227" y="1058" width="4.5" height="4.5" fill="#dde"/><rect x="1233" y="1058" width="4.5" height="4.5" fill="#dde"/><rect x="1239" y="1058" width="4.5" height="4.5" fill="#dde"/><rect x="1239" y="1052" width="5" height="10" fill="#2a4a98"/><rect x="1275.5" y="1035.5" width="30" height="29" fill="#108888"/><path d="M1282 1060 L1299 1060 L1297 1053 Q1302 1046 1296 1044 Q1291 1042 1290.5 1047 Q1290 1042 1285 1044 Q1279 1046 1284 1053 Z" fill="#fff" stroke="#222" stroke-width="0.8"/><path d="M1290.5 1037 L1290.5 1043 M1288.5 1039 L1292.5 1039" stroke="#fff" stroke-width="1.3"/><rect x="1321.5" y="1025" width="49" height="49.5" rx="4" fill="#2e2c34" stroke="#3a3840" stroke-width="1"/><rect x="1331" y="1035" width="30" height="30" rx="1.5" fill="url(#ms)"/><path d="M1338.2 1063 L1339 1051 L1342 1051 L1341.5 1063 Z M1343 1063 L1343.8 1044 L1347.5 1044 L1347 1063 Z M1348 1063 L1349 1037 L1353 1037 L1352 1063 Z" fill="#f88a18"/><rect x="1336" y="1070.5" width="20" height="3" rx="1.5" fill="#4cc2ff"/><rect x="1386" y="1035.5" width="30" height="29.5" rx="4" fill="none" stroke="#8a1828" stroke-width="1.5"/><text x="1388.5" y="1060" font-family='"Liberation Sans", sans-serif' font-size="13" fill="#a02030">Pro</text><rect x="681" y="1070.5" width="8" height="3" rx="1.5" fill="#9a9a9a"/><rect x="846" y="1070.5" width="8" height="3" rx="1.5" fill="#9a9a9a"/><rect x="1121" y="1070.5" width="8" height="3" rx="1.5" fill="#9a9a9a"/><rect x="1396" y="1070.5" width="8" height="3" rx="1.5" fill="#9a9a9a"/><path d="M1628.5 1055 L1636.5 1047 L1644.5 1055" fill="none" stroke="#e8e8e8" stroke-width="1.3"/><circle cx="1662" cy="1048" r="6" fill="#c8c8c8"/><circle cx="1667" cy="1046" r="5" fill="#e0e0e0"/><rect x="1656" y="1048" width="16" height="6" rx="3" fill="#d8d8d8"/><circle cx="1670.5" cy="1054.5" r="5.5" fill="#d01818"/><path d="M1668.5 1052.5 L1672.5 1056.5 M1672.5 1052.5 L1668.5 1056.5" stroke="#fff" stroke-width="1.3"/><path d="M1691 1048 Q1701 1038 1711 1048 M1694 1051 Q1701 1044 1708 1051 M1697 1054 Q1701 1050 1705 1054" fill="none" stroke="#f0f0f0" stroke-width="1.6"/><circle cx="1701" cy="1056.5" r="1.6" fill="#f0f0f0"/><path d="M1721.5 1047 L1725 1047 L1729.5 1042.5 L1729.5 1057.5 L1725 1053 L1721.5 1053 Z" fill="none" stroke="#f0f0f0" stroke-width="1.3"/><path d="M1732 1046.5 Q1734.5 1050 1732 1053.5 M1734.5 1044 Q1738.5 1050 1734.5 1056" fill="none" stroke="#f0f0f0" stroke-width="1.3"/><path d="M1737.5 1041.5 Q1742 1050 1737.5 1058.5" fill="none" stroke="#888" stroke-width="1"/><rect x="1754.5" y="1044.5" width="14" height="11" rx="1.5" fill="none" stroke="#f0f0f0" stroke-width="1.5"/><rect x="1769" y="1047.5" width="2" height="5" fill="#f0f0f0"/><rect x="1756.5" y="1049" width="5" height="5" fill="#f0f0f0"/><path d="M1752 1042 L1752 1046 M1755 1042 L1755 1046 M1751 1046 L1756 1046 L1756 1050" stroke="#f0f0f0" stroke-width="1.2" fill="none"/><text x="1831.5" y="1045.5" font-family='"Liberation Sans", sans-serif' font-size="14.5" fill="#ffffff" textLength="33.5" lengthAdjust="spacingAndGlyphs">19:57</text><text x="1791" y="1065.5" font-family='"Liberation Sans", sans-serif' font-size="14.5" fill="#ffffff" textLength="74" lengthAdjust="spacingAndGlyphs">18/07/2022</text><circle cx="1885" cy="1050" r="10" fill="#4cc2ff"/><text x="1885" y="1055" text-anchor="middle" font-family='"Liberation Sans", sans-serif' font-size="13" fill="#111">1</text>
</svg>
</body></html>
